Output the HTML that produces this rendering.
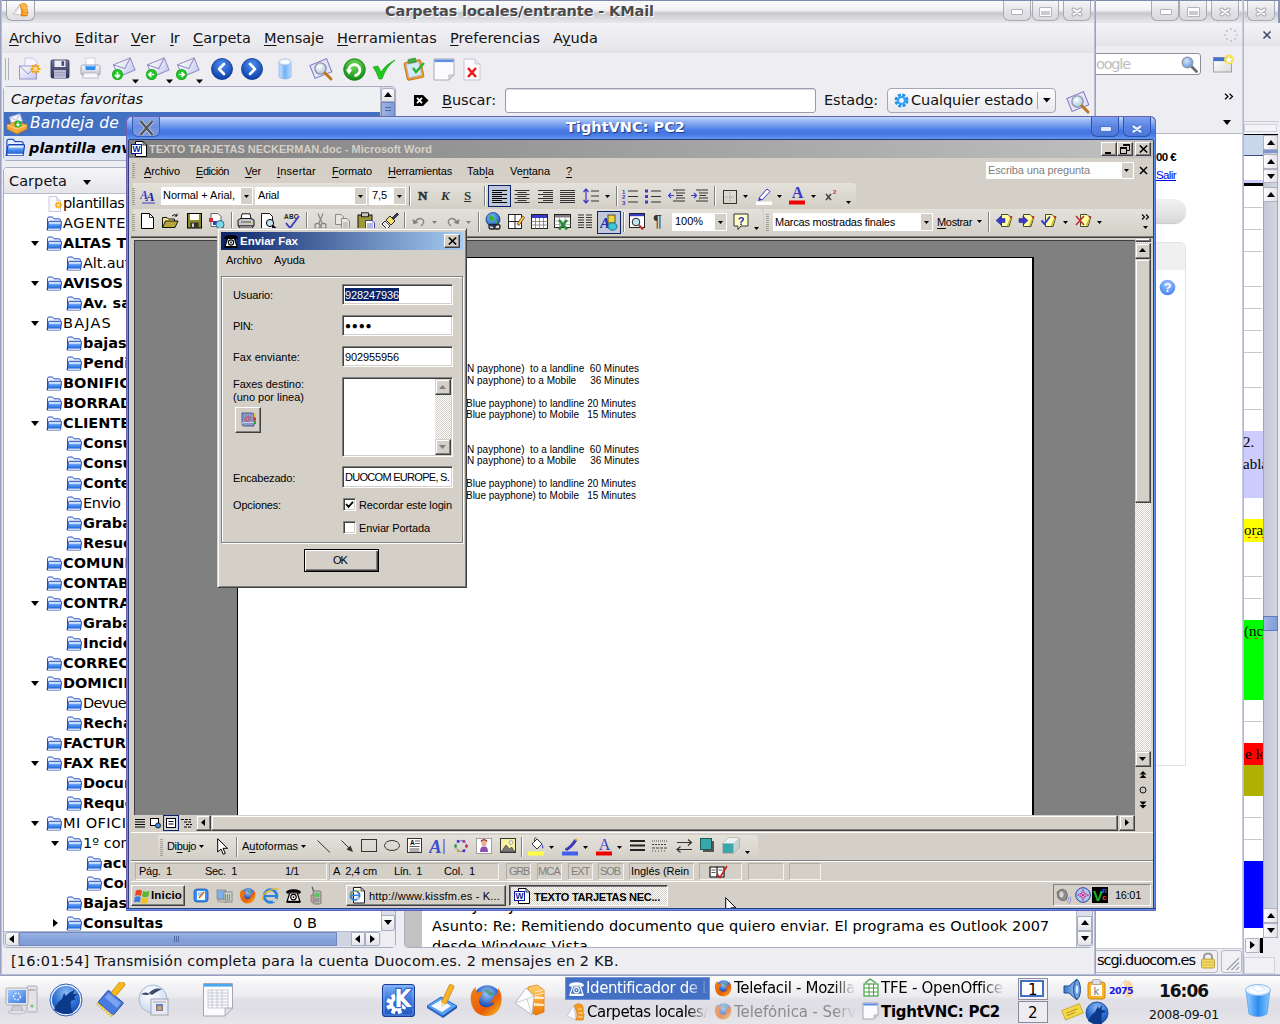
<!DOCTYPE html>
<html><head><meta charset="utf-8"><title>KMail</title>
<style>
*{box-sizing:border-box;margin:0;padding:0}
html,body{width:1280px;height:1024px;overflow:hidden;background:#eeeef2}
body{font-family:"DejaVu Sans","Liberation Sans",sans-serif;font-size:14px;color:#111;position:relative}
.a{position:absolute}
.t{position:absolute;white-space:nowrap;line-height:1}
u{text-decoration:underline;text-underline-offset:2px;text-decoration-thickness:1px}
</style></head><body>
<div class="a" style="left:1096px;top:0px;width:148px;height:976px;background:#eeeef2"></div>
<div class="a" style="left:1096px;top:0px;width:148px;height:23px;background:linear-gradient(#fbfbfc 0px,#f4f4f6 9px,#e9e9ec 11px,#c6c6cb 13px,#d2d2d7 16px,#e6e6ea 22px)"></div>
<div class="a" style="left:1096px;top:0px;width:148px;height:1px;background:#7f88ad"></div>
<div class="a" style="left:1151px;top:1px;width:28px;height:20px;border:1px solid #a9a9b3;border-top:none;border-radius:0 0 6px 6px;background:linear-gradient(#f6f6f8,#e4e4e8 50%,#dadade)"></div>
<div class="a" style="left:1179px;top:1px;width:28px;height:20px;border:1px solid #a9a9b3;border-top:none;border-radius:0 0 6px 6px;background:linear-gradient(#f6f6f8,#e4e4e8 50%,#dadade)"></div>
<div class="a" style="left:1211px;top:1px;width:28px;height:20px;border:1px solid #a9a9b3;border-top:none;border-radius:0 0 6px 6px;background:linear-gradient(#f6f6f8,#e4e4e8 50%,#dadade)"></div>
<div class="a" style="left:1160px;top:9px;width:12px;height:6px;border:1px solid #b0b0ba;background:#fff;border-radius:1px"></div>
<div class="a" style="left:1187px;top:7px;width:13px;height:10px;border:1px solid #b4b4be;background:linear-gradient(#fff 3px,#c9c9d1 3px);box-shadow:inset 0 0 0 1px #fff;border-radius:1px"></div>
<svg class="a" style="left:1218px;top:6px;" width="14" height="11" viewBox="0 0 14 11"><path d="M3.5 3.5 L10.5 8.5 M10.5 3.5 L3.5 8.5" stroke="#adadb7" stroke-width="4" stroke-linecap="round"/><path d="M3.5 3.5 L10.5 8.5 M10.5 3.5 L3.5 8.5" stroke="#fff" stroke-width="2" stroke-linecap="round"/></svg>
<div class="a" style="left:1096px;top:23px;width:146px;height:23px;background:linear-gradient(#f3f3f6,#eeeef2 35%,#e9e9ed 75%,#e2e2e7)"></div>
<svg class="a" style="left:1223px;top:27px;" width="16" height="16" viewBox="0 0 16 16"><circle cx="13.8" cy="8.0" r="1.1" fill="#c4c4cc"/><circle cx="12.1" cy="12.1" r="1.1" fill="#c4c4cc"/><circle cx="8.0" cy="13.8" r="1.1" fill="#c4c4cc"/><circle cx="3.9" cy="12.1" r="1.1" fill="#c4c4cc"/><circle cx="2.2" cy="8.0" r="1.1" fill="#c4c4cc"/><circle cx="3.9" cy="3.9" r="1.1" fill="#c4c4cc"/><circle cx="8.0" cy="2.2" r="1.1" fill="#c4c4cc"/><circle cx="12.1" cy="3.9" r="1.1" fill="#c4c4cc"/></svg>
<div class="a" style="left:1090px;top:53px;width:111px;height:22px;background:#fff;border:1px solid #8f8f96;border-radius:3px"></div>
<div class="t" style="left:1096px;top:56.7px;font-size:14.5px;color:#bdbdbd;letter-spacing:-1.20px;">oogle</div>
<svg class="a" style="left:1180px;top:55px;" width="19" height="19" viewBox="0 0 19 19"><defs><radialGradient id="g1" cx=".4" cy=".35" r=".7"><stop offset="0" stop-color="#d6e8fb"/><stop offset="1" stop-color="#5f97dc"/></radialGradient></defs><path d="M11.5 11.5 L16.5 16.5" stroke="#6a6a6a" stroke-width="2.8" stroke-linecap="round"/><circle cx="7.5" cy="7.5" r="5.3" fill="url(#g1)" stroke="#8c99aa" stroke-width="1.3"/></svg>
<svg class="a" style="left:1212px;top:53px;" width="24" height="22" viewBox="0 0 24 22"><defs><linearGradient id="g2" x1="0" y1="0" x2="1" y2="1"><stop offset="0" stop-color="#fff"/><stop offset="1" stop-color="#dcdcdc"/></linearGradient></defs><rect x="1.5" y="4.5" width="18" height="14.5" fill="url(#g2)" stroke="#a0a0a0" stroke-width="1"/><rect x="1.5" y="4.5" width="18" height="3.6" fill="#3f74cc"/><circle cx="17" cy="6.5" r="5" fill="#f6e04a" opacity=".9"/><path d="M17 3 L18 5.6 L20.8 5.7 L18.6 7.4 L19.4 10 L17 8.5 L14.6 10 L15.4 7.4 L13.2 5.7 L16 5.6Z" fill="#fff"/></svg>
<svg class="a" style="left:1224px;top:93px;" width="10" height="7" viewBox="0 0 10 7"><path d="M1 .8 L4 3.5 L1 6.2 M5.5 .8 L8.5 3.5 L5.5 6.2" stroke="#000" stroke-width="1.2" fill="none"/></svg>
<svg class="a" style="left:1223px;top:120px;" width="9" height="6" viewBox="0 0 9 6"><path d="M0 0 H8 L4 5Z" fill="#000"/></svg>
<div class="a" style="left:1096px;top:133px;width:146px;height:815px;background:#fff;border-top:1px solid #b4b6c4"></div>
<div class="t" style="left:1156px;top:151.8px;font-size:11.5px;font-family:'Liberation Sans','DejaVu Sans',sans-serif;color:#000;font-weight:bold;letter-spacing:-0.60px;">00 €</div>
<div class="t" style="left:1156px;top:170.3px;font-size:11.5px;font-family:'Liberation Sans','DejaVu Sans',sans-serif;color:#0000ee;letter-spacing:-0.60px;text-decoration:underline;">Salir</div>
<div class="a" style="left:1140px;top:199px;width:46px;height:24px;background:linear-gradient(#f1f1f1,#e4e4e4 60%,#d6d6d6);border-radius:0 12px 12px 0;box-shadow:0 1px 1px #c8c8c8"></div>
<div class="a" style="left:1140px;top:242px;width:46px;height:524px;background:#fff;border:1px solid #e2e2e2;border-radius:0 6px 0 0"></div>
<div class="a" style="left:1140px;top:243px;width:45px;height:27px;background:#f0f0f0;border-radius:0 5px 0 0"></div>
<svg class="a" style="left:1159px;top:279px;" width="17" height="17" viewBox="0 0 17 17"><defs><radialGradient id="g3" cx=".5" cy=".3" r=".8"><stop offset="0" stop-color="#9cc4ff"/><stop offset="1" stop-color="#3b7cf0"/></radialGradient></defs><circle cx="8.5" cy="8.5" r="7.8" fill="url(#g3)"/><text x="8.5" y="13" text-anchor="middle" font-family="Liberation Sans,sans-serif" font-weight="bold" font-size="12.5" fill="#fff">?</text></svg>
<div class="a" style="left:1096px;top:948px;width:146px;height:28px;background:#eeeef2;border-top:1px solid #c4c6d2"></div>
<div class="a" style="left:1090px;top:950px;width:128px;height:23px;border:1px solid #b6b8c6;border-radius:3px;background:#f1f1f5"></div>
<div class="t" style="left:1097px;top:952.7px;font-size:14.5px;color:#000;letter-spacing:-1.05px;">scgi.duocom.es</div>
<svg class="a" style="left:1199px;top:951px;" width="18" height="18" viewBox="0 0 18 18"><path d="M5 9 V6 Q5 2.5 9 2.5 Q13 2.5 13 6 V9" fill="none" stroke="#9c9c9c" stroke-width="2"/><rect x="2.5" y="8" width="13" height="9" rx="1.5" fill="#f3d86a" stroke="#b89a28" stroke-width=".9"/><path d="M3.5 11 h11 M3.5 14 h11" stroke="#d4b43c" stroke-width="1"/></svg>
<div class="a" style="left:1221px;top:950px;width:21px;height:23px;border:1px solid #b6b8c6;border-radius:3px;background:#f1f1f5"></div>
<svg class="a" style="left:1225px;top:956px;" width="15" height="15" viewBox="0 0 15 15"><path d="M14 2 L2 14 M14 6.5 L6.5 14 M14 11 L11 14" stroke="#9a9ca8" stroke-width="1.1"/></svg>
<div class="a" style="left:1242px;top:0px;width:2px;height:976px;background:linear-gradient(90deg,#d6d9e6,#a4aac6)"></div>
<div class="a" style="left:1096px;top:974px;width:148px;height:2px;background:linear-gradient(#c4c8da,#8a92b6)"></div>
<div class="a" style="left:1244px;top:0px;width:36px;height:976px;background:#eeeef2"></div>
<div class="a" style="left:1244px;top:0px;width:36px;height:23px;background:linear-gradient(#fbfbfc 0px,#f4f4f6 9px,#e9e9ec 11px,#c6c6cb 13px,#d2d2d7 16px,#e6e6ea 22px)"></div>
<div class="a" style="left:1244px;top:0px;width:36px;height:1px;background:#7f88ad"></div>
<div class="a" style="left:1247px;top:1px;width:28px;height:20px;border:1px solid #a9a9b3;border-top:none;border-radius:0 0 6px 6px;background:linear-gradient(#f6f6f8,#e4e4e8 50%,#dadade)"></div>
<svg class="a" style="left:1254px;top:6px;" width="14" height="11" viewBox="0 0 14 11"><path d="M3.5 3.5 L10.5 8.5 M10.5 3.5 L3.5 8.5" stroke="#adadb7" stroke-width="4" stroke-linecap="round"/><path d="M3.5 3.5 L10.5 8.5 M10.5 3.5 L3.5 8.5" stroke="#fff" stroke-width="2" stroke-linecap="round"/></svg>
<div class="a" style="left:1278px;top:0px;width:2px;height:23px;background:#8a92b6"></div>
<div class="a" style="left:1244px;top:23px;width:36px;height:23px;background:linear-gradient(#f3f3f6,#eeeef2 35%,#e9e9ed 75%,#e2e2e7)"></div>
<svg class="a" style="left:1262px;top:30px;" width="10" height="10" viewBox="0 0 10 10"><path d="M1.5 1.5 L8.5 8.5 M8.5 1.5 L1.5 8.5" stroke="#3b4262" stroke-width="1.5"/></svg>
<div class="a" style="left:1244px;top:121px;width:35px;height:1px;background:#c9cbd6"></div>
<div class="a" style="left:1244px;top:124px;width:33px;height:8px;background:#f4f4f7;border:1px solid #d0d2dc"></div>
<div class="a" style="left:1244px;top:133px;width:19px;height:805px;background:#fff"></div>
<div class="a" style="left:1244px;top:134px;width:34px;height:1px;background:#000"></div>
<div class="a" style="left:1244px;top:135px;width:19px;height:20px;background:#c9d6ec"></div>
<div class="a" style="left:1244px;top:155px;width:19px;height:1px;background:#3c4c84"></div>
<div class="a" style="left:1244px;top:180px;width:19px;height:3px;background:#ccccff"></div>
<div class="a" style="left:1244px;top:183px;width:34px;height:3px;background:#000"></div>
<div class="a" style="left:1244px;top:207px;width:18px;height:1px;background:#c8c8c8"></div>
<div class="a" style="left:1244px;top:229px;width:18px;height:1px;background:#c8c8c8"></div>
<div class="a" style="left:1244px;top:251px;width:18px;height:1px;background:#c8c8c8"></div>
<div class="a" style="left:1244px;top:286px;width:18px;height:1px;background:#c8c8c8"></div>
<div class="a" style="left:1244px;top:308px;width:18px;height:1px;background:#c8c8c8"></div>
<div class="a" style="left:1244px;top:330px;width:18px;height:1px;background:#c8c8c8"></div>
<div class="a" style="left:1244px;top:352px;width:18px;height:1px;background:#c8c8c8"></div>
<div class="a" style="left:1244px;top:387px;width:18px;height:1px;background:#c8c8c8"></div>
<div class="a" style="left:1244px;top:409px;width:18px;height:1px;background:#c8c8c8"></div>
<div class="a" style="left:1244px;top:576px;width:18px;height:1px;background:#c8c8c8"></div>
<div class="a" style="left:1244px;top:598px;width:18px;height:1px;background:#c8c8c8"></div>
<div class="a" style="left:1244px;top:721px;width:18px;height:1px;background:#c8c8c8"></div>
<div class="a" style="left:1244px;top:817px;width:18px;height:1px;background:#c8c8c8"></div>
<div class="a" style="left:1244px;top:839px;width:18px;height:1px;background:#c8c8c8"></div>
<div class="a" style="left:1244px;top:431px;width:19px;height:67px;background:#ccccff"></div>
<div class="t" style="left:1243px;top:435.3px;font-size:15px;font-family:'Liberation Serif','DejaVu Serif',serif;color:#000;">2.</div>
<div class="t" style="left:1243px;top:457.3px;font-size:15px;font-family:'Liberation Serif','DejaVu Serif',serif;color:#000;width:20px;overflow:hidden;">abla</div>
<div class="a" style="left:1244px;top:519px;width:19px;height:23px;background:#ffff00"></div>
<div class="t" style="left:1244px;top:523.3px;font-size:15px;font-family:'Liberation Serif','DejaVu Serif',serif;color:#000;width:19px;overflow:hidden;text-decoration:underline wavy #e00000;text-decoration-thickness:1px;text-underline-offset:1px;">ora</div>
<div class="a" style="left:1244px;top:620px;width:19px;height:80px;background:#00ff00"></div>
<div class="t" style="left:1244px;top:624.3px;font-size:15px;font-family:'Liberation Serif','DejaVu Serif',serif;color:#000;width:19px;overflow:hidden;text-decoration:underline wavy #e00000;text-decoration-thickness:1px;text-underline-offset:1px;">(nce</div>
<div class="a" style="left:1244px;top:743px;width:19px;height:22px;background:#ff0000"></div>
<div class="t" style="left:1245px;top:747.3px;font-size:15px;font-family:'Liberation Serif','DejaVu Serif',serif;color:#000;width:18px;overflow:hidden;">e lo</div>
<div class="a" style="left:1244px;top:765px;width:19px;height:31px;background:#b0b000"></div>
<div class="a" style="left:1244px;top:861px;width:19px;height:67px;background:#0000ff"></div>
<div class="a" style="left:1263px;top:135px;width:15px;height:803px;background:linear-gradient(90deg,#c4c8d6,#d4d7e2);border-left:1px solid #9ea4bc;border-right:1px solid #9ea4bc"></div>
<div class="a" style="left:1263px;top:135px;width:15px;height:15px;background:linear-gradient(90deg,#fcfcfd,#e2e2e8);border:1px solid #aeb1c0;border-radius:2px"></div>
<svg class="a" style="left:1267px;top:140px;" width="8" height="6" viewBox="0 0 8 6"><path d="M4 0 L8 5 L0 5Z" fill="#000"/></svg>
<div class="a" style="left:1263px;top:150px;width:15px;height:3px;background:#7f96cc"></div>
<div class="a" style="left:1263px;top:154px;width:15px;height:15px;background:linear-gradient(90deg,#fcfcfd,#e2e2e8);border:1px solid #aeb1c0;border-radius:2px"></div>
<svg class="a" style="left:1267px;top:159px;" width="8" height="6" viewBox="0 0 8 6"><path d="M4 0 L8 5 L0 5Z" fill="#000"/></svg>
<div class="a" style="left:1263px;top:169px;width:15px;height:14px;background:linear-gradient(90deg,#fcfcfd,#e2e2e8);border:1px solid #aeb1c0;border-radius:2px"></div>
<svg class="a" style="left:1267px;top:174px;" width="8" height="6" viewBox="0 0 8 6"><path d="M0 0 H8 L4 5Z" fill="#000"/></svg>
<div class="a" style="left:1263px;top:187px;width:15px;height:15px;background:linear-gradient(90deg,#fcfcfd,#e2e2e8);border:1px solid #aeb1c0;border-radius:2px"></div>
<svg class="a" style="left:1267px;top:192px;" width="8" height="6" viewBox="0 0 8 6"><path d="M4 0 L8 5 L0 5Z" fill="#000"/></svg>
<div class="a" style="left:1263px;top:616px;width:15px;height:15px;background:linear-gradient(90deg,#9db4e2,#7f9cd8);border:1px solid #5f7cc0"></div>
<div class="a" style="left:1263px;top:908px;width:15px;height:15px;background:linear-gradient(90deg,#fcfcfd,#e2e2e8);border:1px solid #aeb1c0;border-radius:2px"></div>
<svg class="a" style="left:1267px;top:913px;" width="8" height="6" viewBox="0 0 8 6"><path d="M4 0 L8 5 L0 5Z" fill="#000"/></svg>
<div class="a" style="left:1263px;top:923px;width:15px;height:15px;background:linear-gradient(90deg,#fcfcfd,#e2e2e8);border:1px solid #aeb1c0;border-radius:2px"></div>
<svg class="a" style="left:1267px;top:928px;" width="8" height="6" viewBox="0 0 8 6"><path d="M0 0 H8 L4 5Z" fill="#000"/></svg>
<div class="a" style="left:1244px;top:938px;width:35px;height:38px;background:#eeeef2"></div>
<div class="a" style="left:1245px;top:938px;width:15px;height:15px;background:linear-gradient(90deg,#fcfcfd,#e2e2e8);border:1px solid #aeb1c0;border-radius:2px"></div>
<svg class="a" style="left:1250px;top:941px;" width="6" height="9" viewBox="0 0 6 9"><path d="M0 0 V8 L5 4Z" fill="#000"/></svg>
<div class="a" style="left:1260px;top:938px;width:3px;height:15px;background:#000"></div>
<div class="a" style="left:1244px;top:957px;width:31px;height:17px;border:1px solid #d0d2dc;background:#f1f1f5"></div>
<div class="a" style="left:1244px;top:974px;width:36px;height:2px;background:linear-gradient(#c4c8da,#8a92b6)"></div>
<div class="a" style="left:0px;top:0px;width:1096px;height:976px;background:#eeeef2"></div>
<div class="a" style="left:0px;top:0px;width:1096px;height:23px;background:linear-gradient(#fbfbfc 0px,#f4f4f6 9px,#e9e9ec 11px,#c6c6cb 13px,#d2d2d7 16px,#e6e6ea 22px)"></div>
<div class="a" style="left:0px;top:0px;width:1096px;height:1px;background:#7f88ad"></div>
<div class="a" style="left:6px;top:1px;width:29px;height:20px;border:1px solid #a3a3ad;border-top:none;border-radius:0 0 6px 6px;background:linear-gradient(#fdfdfd,#ebebee 55%,#dedee2)"></div>
<svg class="a" style="left:12px;top:2px;" width="18" height="17" viewBox="0 0 18 17"><defs><linearGradient id="g4" x1="0" y1="0" x2="0" y2="1"><stop offset="0" stop-color="#ffc44a"/><stop offset="1" stop-color="#ef7d00"/></linearGradient></defs><path d="M1 12 L8 2 L10 13 Z" fill="#fafafa" stroke="#b4b4be" stroke-width=".8"/><path d="M3.5 11 L8 3" stroke="#c8c8d0" stroke-width=".8"/><path d="M8 3 Q11 0 14 2 Q16 4 15 7 Q17 10 15 14 L9 14 Q11 9 8 3Z" fill="url(#g4)" stroke="#d47400" stroke-width=".6"/><path d="M11 6 h4 M11.5 9 h4 M11 12 h4" stroke="#ffdf9a" stroke-width=".9"/></svg>
<div class="t" style="left:385.0px;top:3.7px;font-size:14.5px;color:#4c4c4c;font-weight:bold;letter-spacing:-0.12px;text-shadow:1px 1px 0 #fff;">Carpetas locales/entrante - KMail</div>
<div class="a" style="left:1003px;top:1px;width:28px;height:20px;border:1px solid #a9a9b3;border-top:none;border-radius:0 0 6px 6px;background:linear-gradient(#f6f6f8,#e4e4e8 50%,#dadade)"></div>
<div class="a" style="left:1032px;top:1px;width:27px;height:20px;border:1px solid #a9a9b3;border-top:none;border-radius:0 0 6px 6px;background:linear-gradient(#f6f6f8,#e4e4e8 50%,#dadade)"></div>
<div class="a" style="left:1063px;top:1px;width:28px;height:20px;border:1px solid #a9a9b3;border-top:none;border-radius:0 0 6px 6px;background:linear-gradient(#f6f6f8,#e4e4e8 50%,#dadade)"></div>
<div class="a" style="left:1011px;top:9px;width:12px;height:6px;border:1px solid #b0b0ba;background:#fff;border-radius:1px"></div>
<div class="a" style="left:1039px;top:7px;width:13px;height:10px;border:1px solid #b4b4be;background:linear-gradient(#fff 3px,#c9c9d1 3px);box-shadow:inset 0 0 0 1px #fff;border-radius:1px"></div>
<svg class="a" style="left:1070px;top:6px;" width="14" height="11" viewBox="0 0 14 11"><path d="M3.5 3.5 L10.5 8.5 M10.5 3.5 L3.5 8.5" stroke="#adadb7" stroke-width="4" stroke-linecap="round"/><path d="M3.5 3.5 L10.5 8.5 M10.5 3.5 L3.5 8.5" stroke="#fff" stroke-width="2" stroke-linecap="round"/></svg>
<div class="a" style="left:0px;top:23px;width:1096px;height:30px;background:linear-gradient(#f3f3f6,#eeeef2 35%,#e9e9ed 75%,#e2e2e7)"></div>
<div class="t" style="left:9px;top:30.7px;font-size:14.5px;letter-spacing:-0.32px;"><u>A</u>rchivo</div>
<div class="t" style="left:75px;top:30.7px;font-size:14.5px;letter-spacing:0.18px;"><u>E</u>ditar</div>
<div class="t" style="left:131px;top:30.7px;font-size:14.5px;letter-spacing:0.44px;"><u>V</u>er</div>
<div class="t" style="left:170px;top:30.7px;font-size:14.5px;letter-spacing:-0.62px;"><u>I</u>r</div>
<div class="t" style="left:193px;top:30.7px;font-size:14.5px;letter-spacing:0.05px;"><u>C</u>arpeta</div>
<div class="t" style="left:264px;top:30.7px;font-size:14.5px;"><u>M</u>ensaje</div>
<div class="t" style="left:337px;top:30.7px;font-size:14.5px;letter-spacing:0.10px;"><u>H</u>erramientas</div>
<div class="t" style="left:450px;top:30.7px;font-size:14.5px;letter-spacing:0.06px;"><u>P</u>referencias</div>
<div class="t" style="left:553px;top:30.7px;font-size:14.5px;letter-spacing:0.04px;">A<u>y</u>uda</div>
<div class="a" style="left:0px;top:53px;width:1096px;height:34px;background:#eeeef2"></div>
<div class="a" style="left:5px;top:58px;width:1px;height:22px;background:#b0b0bb"></div>
<div class="a" style="left:8px;top:58px;width:1px;height:22px;background:#b0b0bb"></div>
<svg class="a" style="left:18px;top:57px;" width="24" height="24" viewBox="0 0 24 24"><defs><linearGradient id="g5" x1="0" y1="0" x2="1" y2="1"><stop offset="0" stop-color="#fff"/><stop offset="1" stop-color="#c3c6ee"/></linearGradient></defs><path d="M7 1 H15 L19 5 V14 H7Z" fill="#f6f6ff" stroke="#bcbcd8" stroke-width=".8"/><rect x="1.5" y="9" width="17" height="13" fill="url(#g5)" stroke="#9696cc" stroke-width="1"/><path d="M1.5 9 L10 17 L18.5 9" fill="none" stroke="#9696cc"/><g transform="translate(17.5,12)" stroke="#f7a30c" stroke-width="1.8"><path d="M-5 0H5M0 -5V5M-3.5 -3.5L3.5 3.5M-3.5 3.5L3.5 -3.5"/></g><circle cx="17.5" cy="12" r="2.2" fill="#ffe08a"/></svg>
<svg class="a" style="left:50px;top:58px;" width="20" height="22" viewBox="0 0 20 22"><defs><linearGradient id="g6" x1="0" y1="0" x2="0" y2="1"><stop offset="0" stop-color="#6d7296"/><stop offset="1" stop-color="#2d3158"/></linearGradient></defs><rect x="1" y="2" width="18" height="18" rx="1.5" fill="url(#g6)" stroke="#2a2d50" stroke-width=".8"/><rect x="4.5" y="2.5" width="11" height="6.5" fill="#eeeef6"/><rect x="11.5" y="3.2" width="2.6" height="4.6" fill="#474b70"/><rect x="4" y="12" width="12" height="8" fill="#b9bbd2"/><path d="M4 14.5h12M4 17h12" stroke="#8f92b0" stroke-width=".7"/></svg>
<svg class="a" style="left:78px;top:56px;" width="25" height="25" viewBox="0 0 25 25"><defs><linearGradient id="g7" x1="0" y1="0" x2="0" y2="1"><stop offset="0" stop-color="#fff"/><stop offset="1" stop-color="#bfc0cc"/></linearGradient></defs><path d="M8 2 H17 V12 H8Z" fill="#fff" stroke="#c4c6d6" stroke-width=".8"/><path d="M3 11 Q3 9 5 9 H20 Q22 9 22 11 V18 Q22 19 20 19 H5 Q3 19 3 18Z" fill="url(#g7)" stroke="#9a9cb0" stroke-width=".9"/><path d="M7 10 L8 14 H17 L18 10Z" fill="#2f8df0"/><path d="M7 10 H18" stroke="#86c2ff" stroke-width="1.2"/><path d="M6 17 H19 L20.5 22 H4.5Z" fill="#f8f8fb" stroke="#b0b2c2" stroke-width=".8"/></svg>
<svg class="a" style="left:112px;top:57px;" width="28" height="28" viewBox="0 0 28 28"><defs><linearGradient id="g8" x1="0" y1="0" x2="1" y2="1"><stop offset="0" stop-color="#fff"/><stop offset="1" stop-color="#c9c9ee"/></linearGradient></defs><g transform="rotate(-22 12 11)"><rect x="3.5" y="4" width="18" height="13" fill="url(#g8)" stroke="#8d8cc4" stroke-width="1"/><path d="M3.5 4 L12.5 12 L21.5 4" fill="none" stroke="#8d8cc4" stroke-width="1"/></g><g transform="translate(0,12)"><circle cx="5.5" cy="5.5" r="5.5" fill="#14a81a"/><circle cx="5.5" cy="5.5" r="4.8" fill="#22c22a"/><path d="M5.5 2.8 V8 M3 5.8 L5.5 8.3 L8 5.8" stroke="#fff" stroke-width="1.7" fill="none"/></g><path d="M20 22.5 H27 L23.5 26.5Z" fill="#000"/></svg>
<svg class="a" style="left:146px;top:57px;" width="28" height="28" viewBox="0 0 28 28"><defs><linearGradient id="g9" x1="0" y1="0" x2="1" y2="1"><stop offset="0" stop-color="#fff"/><stop offset="1" stop-color="#c9c9ee"/></linearGradient></defs><g transform="rotate(-22 12 11)"><rect x="3.5" y="4" width="18" height="13" fill="url(#g9)" stroke="#8d8cc4" stroke-width="1"/><path d="M3.5 4 L12.5 12 L21.5 4" fill="none" stroke="#8d8cc4" stroke-width="1"/></g><g transform="translate(0,12)"><circle cx="5.5" cy="5.5" r="5.5" fill="#14a81a"/><circle cx="5.5" cy="5.5" r="4.8" fill="#22c22a"/><path d="M8.2 5.5 H3 M5.4 3 L2.9 5.5 L5.4 8" stroke="#fff" stroke-width="1.7" fill="none"/></g><path d="M20 22.5 H27 L23.5 26.5Z" fill="#000"/></svg>
<svg class="a" style="left:176px;top:57px;" width="28" height="28" viewBox="0 0 28 28"><defs><linearGradient id="g10" x1="0" y1="0" x2="1" y2="1"><stop offset="0" stop-color="#fff"/><stop offset="1" stop-color="#c9c9ee"/></linearGradient></defs><g transform="rotate(-22 12 11)"><rect x="3.5" y="4" width="18" height="13" fill="url(#g10)" stroke="#8d8cc4" stroke-width="1"/><path d="M3.5 4 L12.5 12 L21.5 4" fill="none" stroke="#8d8cc4" stroke-width="1"/></g><g transform="translate(0,12)"><circle cx="5.5" cy="5.5" r="5.5" fill="#14a81a"/><circle cx="5.5" cy="5.5" r="4.8" fill="#22c22a"/><path d="M2.8 5.5 H8 M5.6 3 L8.1 5.5 L5.6 8" stroke="#fff" stroke-width="1.7" fill="none"/></g><path d="M20 22.5 H27 L23.5 26.5Z" fill="#000"/></svg>
<svg class="a" style="left:211px;top:58px;" width="22" height="22" viewBox="0 0 22 22"><defs><radialGradient id="g11" cx=".5" cy=".3" r=".7"><stop offset="0" stop-color="#4f8ff0"/><stop offset="1" stop-color="#0a3ea8"/></radialGradient></defs><circle cx="11" cy="11" r="10.5" fill="url(#g11)" stroke="#0a348c" stroke-width=".8"/><path d="M13 6 L8 11 L13 16" stroke="#fff" stroke-width="2.6" fill="none" stroke-linecap="round" stroke-linejoin="round"/></svg>
<svg class="a" style="left:241px;top:58px;" width="22" height="22" viewBox="0 0 22 22"><defs><radialGradient id="g12" cx=".5" cy=".3" r=".7"><stop offset="0" stop-color="#4f8ff0"/><stop offset="1" stop-color="#0a3ea8"/></radialGradient></defs><circle cx="11" cy="11" r="10.5" fill="url(#g12)" stroke="#0a348c" stroke-width=".8"/><path d="M9 6 L14 11 L9 16" stroke="#fff" stroke-width="2.6" fill="none" stroke-linecap="round" stroke-linejoin="round"/></svg>
<svg class="a" style="left:277px;top:57px;" width="17" height="25" viewBox="0 0 17 25"><defs><linearGradient id="g13" x1="0" y1="0" x2="1" y2="0"><stop offset="0" stop-color="#cfe6ff"/><stop offset=".5" stop-color="#6fb0f5"/><stop offset="1" stop-color="#bcdcff"/></linearGradient></defs><path d="M2 5 V20 Q8 24 14 20 V5Z" fill="url(#g13)" stroke="#8eb4e6" stroke-width=".8"/><ellipse cx="8" cy="5" rx="6" ry="3" fill="#eef6ff" stroke="#9dbbe0" stroke-width=".8"/><ellipse cx="8" cy="4.5" rx="3.5" ry="1.6" fill="#fff"/></svg>
<svg class="a" style="left:309px;top:57px;" width="26" height="25" viewBox="0 0 26 25"><defs><radialGradient id="g14" cx=".4" cy=".35" r=".7"><stop offset="0" stop-color="#ffffff"/><stop offset="1" stop-color="#a9c4d8"/></radialGradient></defs><g transform="rotate(-22 12 12)"><rect x="3" y="4.5" width="18" height="14" fill="#e6e4fa" stroke="#7f78c4" stroke-width="1"/></g><circle cx="11.5" cy="11.5" r="5.6" fill="url(#g14)" stroke="#8a98a8" stroke-width="1.4"/><path d="M16 16 L22 22" stroke="#c0761a" stroke-width="3" stroke-linecap="round"/></svg>
<svg class="a" style="left:343px;top:58px;" width="23" height="23" viewBox="0 0 23 23"><defs><radialGradient id="g15" cx=".5" cy=".3" r=".7"><stop offset="0" stop-color="#6fdc5a"/><stop offset="1" stop-color="#128a12"/></radialGradient></defs><circle cx="11.5" cy="11.5" r="10.8" fill="url(#g15)" stroke="#0f7a0f" stroke-width=".8"/><path d="M6 13 A5.5 5.5 0 1 1 11.5 17.5" fill="none" stroke="#fff" stroke-width="2.8"/><path d="M2.8 11.5 L9.5 11.5 L6 16.5Z" fill="#fff"/></svg>
<svg class="a" style="left:372px;top:58px;" width="24" height="22" viewBox="0 0 24 22"><path d="M1 9 L6 8 L9 14 Q14 6 23 2 Q14 9 10 21 L7 21 Q4 13 1 9Z" fill="#1ec81e" stroke="#0f9a0f" stroke-width=".6"/></svg>
<svg class="a" style="left:402px;top:57px;" width="25" height="25" viewBox="0 0 25 25"><g transform="rotate(-12 12 13)"><rect x="3.5" y="4" width="17" height="18" rx="1.5" fill="#f09a2e" stroke="#c06a10" stroke-width=".8"/><rect x="5.5" y="6" width="13" height="13.5" fill="#d6e8fb" stroke="#9ab6dc" stroke-width=".6"/><rect x="8" y="1.5" width="8" height="4" rx="1" fill="#3fae3f" stroke="#2a862a" stroke-width=".6"/></g><path d="M11 11 L14 15 L22 6" stroke="#28b428" stroke-width="2.4" fill="none"/></svg>
<svg class="a" style="left:433px;top:58px;" width="22" height="23" viewBox="0 0 22 23"><path d="M1 1 H21 V17 L16 22 H1Z" fill="#fbfbfd" stroke="#a9aab8" stroke-width="1"/><rect x="1.5" y="1.5" width="19" height="2.6" fill="#5f8fe4"/><path d="M21 17 H16 V22Z" fill="#d8d8e0" stroke="#a9aab8" stroke-width=".8"/></svg>
<svg class="a" style="left:463px;top:58px;" width="19" height="23" viewBox="0 0 19 23"><path d="M1 1 H12 L17 6 V22 H1Z" fill="#fbfbfd" stroke="#c2c3d2" stroke-width="1"/><path d="M12 1 V6 H17" fill="#e6e6ee" stroke="#c2c3d2" stroke-width=".8"/><path d="M5 10 L13 19 M13 10 L5 19" stroke="#f01818" stroke-width="2.6"/></svg>
<div class="a" style="left:3px;top:86px;width:393px;height:75px;border:1px solid #a9adc0;border-radius:4px;background:#eff0f4"></div>
<div class="a" style="left:4px;top:87px;width:376px;height:25px;background:#eff0f4"></div>
<div class="t" style="left:11px;top:91.7px;font-size:14.5px;font-style:italic;letter-spacing:-0.08px;">Carpetas favoritas</div>
<div class="a" style="left:4px;top:112px;width:376px;height:24px;background:#4270c2"></div>
<svg class="a" style="left:6px;top:113px;" width="22" height="22" viewBox="0 0 22 22"><g transform="rotate(-18 11 8)"><rect x="5" y="2" width="11" height="8" fill="#f2f4ff" stroke="#aeb2d8" stroke-width=".7"/><path d="M5 2 L10.5 7 L16 2" fill="none" stroke="#aeb2d8" stroke-width=".7"/></g><path d="M1 12 L11 8 L21 12 L21 16 L11 21 L1 16Z" fill="#f4a83a" stroke="#c87a14" stroke-width=".7"/><path d="M1 12 L11 16 L21 12" fill="none" stroke="#ffd894" stroke-width="1"/><circle cx="12" cy="11" r="3.6" fill="#27b82c"/><path d="M12 9 V12.6 M10.3 11.2 L12 13 L13.7 11.2" stroke="#fff" stroke-width="1.1" fill="none"/></svg>
<div class="t" style="left:30px;top:116.2px;font-size:15.5px;color:#fff;font-style:italic;letter-spacing:0.16px;">Bandeja de</div>
<div class="t" style="left:130px;top:116.2px;font-size:15.5px;color:#fff;font-style:italic;">entrada</div>
<div class="a" style="left:4px;top:136px;width:376px;height:24px;background:#dfe6f6"></div>
<svg class="a" style="left:5px;top:138px;" width="20.0" height="18.8" viewBox="0 0 16 15"><defs><linearGradient id="g17" x1="0" y1="0" x2="0" y2="1"><stop offset="0" stop-color="#bcd8ff"/><stop offset=".55" stop-color="#3d86ee"/><stop offset="1" stop-color="#1a4fc0"/></linearGradient></defs><path d="M1.5 13.5 V2.5 Q1.5 1 3 1 H6.5 L8 2.8 H13 Q14.5 2.8 14.5 4.3 V6" fill="#eaf2ff" stroke="#2a55c0" stroke-width="1"/><path d="M1 14 L2.3 6.2 Q2.5 5.3 3.5 5.3 H14.8 Q15.8 5.3 15.6 6.3 L14.5 14Z" fill="url(#g17)" stroke="#1a3fb0" stroke-width=".9"/><path d="M3 7 H14.6" stroke="#e6f0ff" stroke-width="1.3"/><path d="M2 13.2 H14.2" stroke="#fff" stroke-width="1.2"/></svg>
<div class="t" style="left:29px;top:140.7px;font-size:14.5px;color:#000;font-weight:bold;font-style:italic;">plantilla enviada</div>
<div class="a" style="left:380px;top:87px;width:15px;height:73px;background:#d6dbe8;border-left:1px solid #b4b8c8"></div>
<div class="a" style="left:381px;top:88px;width:14px;height:14px;background:linear-gradient(#fbfbfd,#e4e4ea);border:1px solid #a9adc0;border-radius:3px 3px 0 0"></div>
<svg class="a" style="left:384px;top:92px;" width="8" height="6" viewBox="0 0 8 6"><path d="M4 0 L8 5 L0 5Z" fill="#000"/></svg>
<div class="a" style="left:381px;top:102px;width:14px;height:15px;background:linear-gradient(90deg,#9db4e2,#7f9cd8);border:1px solid #6f88c0"></div>
<div class="a" style="left:385px;top:107px;width:6px;height:1px;background:#5069a5"></div>
<div class="a" style="left:385px;top:110px;width:6px;height:1px;background:#5069a5"></div>
<svg class="a" style="left:413px;top:94px;" width="17" height="13" viewBox="0 0 17 13"><path d="M1 1 H10 L15.5 6.5 L10 12 H1Z" fill="#000"/><path d="M4 3.8 L9 9.2 M9 3.8 L4 9.2" stroke="#fff" stroke-width="1.8"/></svg>
<div class="t" style="left:442px;top:93.0px;font-size:14.5px;letter-spacing:-0.02px;"><u>B</u>uscar:</div>
<div class="a" style="left:505px;top:88px;width:311px;height:25px;background:#fff;border:1px solid #9a9eac;border-radius:3px;box-shadow:inset 0 1px 1px #d8d8de"></div>
<div class="t" style="left:824px;top:93.0px;font-size:14.5px;letter-spacing:-0.04px;">Estad<u>o</u>:</div>
<div class="a" style="left:887px;top:88px;width:169px;height:25px;background:linear-gradient(#fcfcfd,#e9e9ee);border:1px solid #a3a6b4;border-radius:4px"></div>
<svg class="a" style="left:893px;top:92px;" width="17" height="17" viewBox="0 0 17 17"><circle cx="8.5" cy="8.5" r="5.2" fill="none" stroke="#1f8fe8" stroke-width="3.6" stroke-dasharray="2.7 1.4"/><circle cx="8.5" cy="8.5" r="4.6" fill="#3ba4f2"/><circle cx="8.5" cy="8.5" r="2.4" fill="#eaf5ff"/></svg>
<div class="t" style="left:911px;top:93.0px;font-size:14.5px;letter-spacing:-0.08px;">Cualquier estado</div>
<div class="a" style="left:1037px;top:92px;width:1px;height:17px;background:#a3a6b4"></div>
<svg class="a" style="left:1043px;top:98px;" width="8" height="5" viewBox="0 0 8 5"><path d="M0 0 H7.5 L3.75 4.5Z" fill="#000"/></svg>
<svg class="a" style="left:1066px;top:90px;" width="26" height="25" viewBox="0 0 26 25"><defs><radialGradient id="g18" cx=".4" cy=".35" r=".7"><stop offset="0" stop-color="#ffffff"/><stop offset="1" stop-color="#a9c4d8"/></radialGradient></defs><g transform="rotate(-22 12 12)"><rect x="3" y="4.5" width="18" height="14" fill="#e6e4fa" stroke="#7f78c4" stroke-width="1"/></g><circle cx="11.5" cy="11.5" r="5.6" fill="url(#g18)" stroke="#8a98a8" stroke-width="1.4"/><path d="M16 16 L22 22" stroke="#c0761a" stroke-width="3" stroke-linecap="round"/></svg>
<div class="a" style="left:3px;top:167px;width:393px;height:781px;border:1px solid #a9adc0;border-radius:4px;background:#fff"></div>
<div class="a" style="left:4px;top:168px;width:391px;height:26px;background:linear-gradient(#f6f6f9,#ebebf0 60%,#e4e4ea);border-bottom:1px solid #b9bccb;border-radius:3px 3px 0 0"></div>
<div class="t" style="left:9px;top:173.7px;font-size:14.5px;letter-spacing:0.05px;">Carpeta</div>
<svg class="a" style="left:83px;top:180px;" width="9" height="6" viewBox="0 0 9 6"><path d="M0 0 H8 L4 5Z" fill="#000"/></svg>
<svg class="a" style="left:48px;top:196px;" width="15" height="16" viewBox="0 0 15 16"><path d="M1 .5 H8.5 L12.5 4.5 V15.5 H1Z" fill="#fafaff" stroke="#c4c6d8" stroke-width=".9"/><path d="M8.5 .5 V4.5 H12.5" fill="#e8e8f2" stroke="#c4c6d8" stroke-width=".7"/><g transform="translate(10.5,9)" stroke="#f4a20c" stroke-width="1.4"><path d="M-3.6 0H3.6M0 -3.6V3.6M-2.6 -2.6L2.6 2.6M-2.6 2.6L2.6 -2.6"/></g><circle cx="10.5" cy="9" r="1.6" fill="#ffe49a"/></svg>
<div class="t" style="left:63px;top:195.7px;font-size:14.5px;color:#000;letter-spacing:-0.40px;">plantillas</div>
<svg class="a" style="left:46px;top:216px;" width="16.0" height="15.0" viewBox="0 0 16 15"><defs><linearGradient id="g19" x1="0" y1="0" x2="0" y2="1"><stop offset="0" stop-color="#bcd8ff"/><stop offset=".55" stop-color="#3d86ee"/><stop offset="1" stop-color="#1a4fc0"/></linearGradient></defs><path d="M1.5 13.5 V2.5 Q1.5 1 3 1 H6.5 L8 2.8 H13 Q14.5 2.8 14.5 4.3 V6" fill="#eaf2ff" stroke="#2a55c0" stroke-width="1"/><path d="M1 14 L2.3 6.2 Q2.5 5.3 3.5 5.3 H14.8 Q15.8 5.3 15.6 6.3 L14.5 14Z" fill="url(#g19)" stroke="#1a3fb0" stroke-width=".9"/><path d="M3 7 H14.6" stroke="#e6f0ff" stroke-width="1.3"/><path d="M2 13.2 H14.2" stroke="#fff" stroke-width="1.2"/></svg>
<div class="t" style="left:63px;top:215.7px;font-size:14.5px;color:#000;letter-spacing:0.69px;">AGENTES</div>
<svg class="a" style="left:46px;top:236px;" width="16.0" height="15.0" viewBox="0 0 16 15"><defs><linearGradient id="g20" x1="0" y1="0" x2="0" y2="1"><stop offset="0" stop-color="#bcd8ff"/><stop offset=".55" stop-color="#3d86ee"/><stop offset="1" stop-color="#1a4fc0"/></linearGradient></defs><path d="M1.5 13.5 V2.5 Q1.5 1 3 1 H6.5 L8 2.8 H13 Q14.5 2.8 14.5 4.3 V6" fill="#eaf2ff" stroke="#2a55c0" stroke-width="1"/><path d="M1 14 L2.3 6.2 Q2.5 5.3 3.5 5.3 H14.8 Q15.8 5.3 15.6 6.3 L14.5 14Z" fill="url(#g20)" stroke="#1a3fb0" stroke-width=".9"/><path d="M3 7 H14.6" stroke="#e6f0ff" stroke-width="1.3"/><path d="M2 13.2 H14.2" stroke="#fff" stroke-width="1.2"/></svg>
<div class="t" style="left:63px;top:235.7px;font-size:14.5px;color:#000;font-weight:bold;">ALTAS TFE</div>
<svg class="a" style="left:31px;top:241px;" width="9" height="6" viewBox="0 0 9 6"><path d="M0 0 H8 L4 5Z" fill="#000"/></svg>
<svg class="a" style="left:66px;top:256px;" width="16.0" height="15.0" viewBox="0 0 16 15"><defs><linearGradient id="g21" x1="0" y1="0" x2="0" y2="1"><stop offset="0" stop-color="#bcd8ff"/><stop offset=".55" stop-color="#3d86ee"/><stop offset="1" stop-color="#1a4fc0"/></linearGradient></defs><path d="M1.5 13.5 V2.5 Q1.5 1 3 1 H6.5 L8 2.8 H13 Q14.5 2.8 14.5 4.3 V6" fill="#eaf2ff" stroke="#2a55c0" stroke-width="1"/><path d="M1 14 L2.3 6.2 Q2.5 5.3 3.5 5.3 H14.8 Q15.8 5.3 15.6 6.3 L14.5 14Z" fill="url(#g21)" stroke="#1a3fb0" stroke-width=".9"/><path d="M3 7 H14.6" stroke="#e6f0ff" stroke-width="1.3"/><path d="M2 13.2 H14.2" stroke="#fff" stroke-width="1.2"/></svg>
<div class="t" style="left:83px;top:255.7px;font-size:14.5px;color:#000;letter-spacing:-0.11px;">Alt.autom</div>
<svg class="a" style="left:46px;top:276px;" width="16.0" height="15.0" viewBox="0 0 16 15"><defs><linearGradient id="g22" x1="0" y1="0" x2="0" y2="1"><stop offset="0" stop-color="#bcd8ff"/><stop offset=".55" stop-color="#3d86ee"/><stop offset="1" stop-color="#1a4fc0"/></linearGradient></defs><path d="M1.5 13.5 V2.5 Q1.5 1 3 1 H6.5 L8 2.8 H13 Q14.5 2.8 14.5 4.3 V6" fill="#eaf2ff" stroke="#2a55c0" stroke-width="1"/><path d="M1 14 L2.3 6.2 Q2.5 5.3 3.5 5.3 H14.8 Q15.8 5.3 15.6 6.3 L14.5 14Z" fill="url(#g22)" stroke="#1a3fb0" stroke-width=".9"/><path d="M3 7 H14.6" stroke="#e6f0ff" stroke-width="1.3"/><path d="M2 13.2 H14.2" stroke="#fff" stroke-width="1.2"/></svg>
<div class="t" style="left:63px;top:275.7px;font-size:14.5px;color:#000;font-weight:bold;">AVISOS</div>
<svg class="a" style="left:31px;top:281px;" width="9" height="6" viewBox="0 0 9 6"><path d="M0 0 H8 L4 5Z" fill="#000"/></svg>
<svg class="a" style="left:66px;top:296px;" width="16.0" height="15.0" viewBox="0 0 16 15"><defs><linearGradient id="g23" x1="0" y1="0" x2="0" y2="1"><stop offset="0" stop-color="#bcd8ff"/><stop offset=".55" stop-color="#3d86ee"/><stop offset="1" stop-color="#1a4fc0"/></linearGradient></defs><path d="M1.5 13.5 V2.5 Q1.5 1 3 1 H6.5 L8 2.8 H13 Q14.5 2.8 14.5 4.3 V6" fill="#eaf2ff" stroke="#2a55c0" stroke-width="1"/><path d="M1 14 L2.3 6.2 Q2.5 5.3 3.5 5.3 H14.8 Q15.8 5.3 15.6 6.3 L14.5 14Z" fill="url(#g23)" stroke="#1a3fb0" stroke-width=".9"/><path d="M3 7 H14.6" stroke="#e6f0ff" stroke-width="1.3"/><path d="M2 13.2 H14.2" stroke="#fff" stroke-width="1.2"/></svg>
<div class="t" style="left:83px;top:295.7px;font-size:14.5px;color:#000;font-weight:bold;">Av. salida</div>
<svg class="a" style="left:46px;top:316px;" width="16.0" height="15.0" viewBox="0 0 16 15"><defs><linearGradient id="g24" x1="0" y1="0" x2="0" y2="1"><stop offset="0" stop-color="#bcd8ff"/><stop offset=".55" stop-color="#3d86ee"/><stop offset="1" stop-color="#1a4fc0"/></linearGradient></defs><path d="M1.5 13.5 V2.5 Q1.5 1 3 1 H6.5 L8 2.8 H13 Q14.5 2.8 14.5 4.3 V6" fill="#eaf2ff" stroke="#2a55c0" stroke-width="1"/><path d="M1 14 L2.3 6.2 Q2.5 5.3 3.5 5.3 H14.8 Q15.8 5.3 15.6 6.3 L14.5 14Z" fill="url(#g24)" stroke="#1a3fb0" stroke-width=".9"/><path d="M3 7 H14.6" stroke="#e6f0ff" stroke-width="1.3"/><path d="M2 13.2 H14.2" stroke="#fff" stroke-width="1.2"/></svg>
<div class="t" style="left:63px;top:315.7px;font-size:14.5px;color:#000;letter-spacing:1.20px;">BAJAS</div>
<svg class="a" style="left:31px;top:321px;" width="9" height="6" viewBox="0 0 9 6"><path d="M0 0 H8 L4 5Z" fill="#000"/></svg>
<svg class="a" style="left:66px;top:336px;" width="16.0" height="15.0" viewBox="0 0 16 15"><defs><linearGradient id="g25" x1="0" y1="0" x2="0" y2="1"><stop offset="0" stop-color="#bcd8ff"/><stop offset=".55" stop-color="#3d86ee"/><stop offset="1" stop-color="#1a4fc0"/></linearGradient></defs><path d="M1.5 13.5 V2.5 Q1.5 1 3 1 H6.5 L8 2.8 H13 Q14.5 2.8 14.5 4.3 V6" fill="#eaf2ff" stroke="#2a55c0" stroke-width="1"/><path d="M1 14 L2.3 6.2 Q2.5 5.3 3.5 5.3 H14.8 Q15.8 5.3 15.6 6.3 L14.5 14Z" fill="url(#g25)" stroke="#1a3fb0" stroke-width=".9"/><path d="M3 7 H14.6" stroke="#e6f0ff" stroke-width="1.3"/><path d="M2 13.2 H14.2" stroke="#fff" stroke-width="1.2"/></svg>
<div class="t" style="left:83px;top:335.7px;font-size:14.5px;color:#000;font-weight:bold;">bajas</div>
<svg class="a" style="left:66px;top:356px;" width="16.0" height="15.0" viewBox="0 0 16 15"><defs><linearGradient id="g26" x1="0" y1="0" x2="0" y2="1"><stop offset="0" stop-color="#bcd8ff"/><stop offset=".55" stop-color="#3d86ee"/><stop offset="1" stop-color="#1a4fc0"/></linearGradient></defs><path d="M1.5 13.5 V2.5 Q1.5 1 3 1 H6.5 L8 2.8 H13 Q14.5 2.8 14.5 4.3 V6" fill="#eaf2ff" stroke="#2a55c0" stroke-width="1"/><path d="M1 14 L2.3 6.2 Q2.5 5.3 3.5 5.3 H14.8 Q15.8 5.3 15.6 6.3 L14.5 14Z" fill="url(#g26)" stroke="#1a3fb0" stroke-width=".9"/><path d="M3 7 H14.6" stroke="#e6f0ff" stroke-width="1.3"/><path d="M2 13.2 H14.2" stroke="#fff" stroke-width="1.2"/></svg>
<div class="t" style="left:83px;top:355.7px;font-size:14.5px;color:#000;font-weight:bold;">Pendientes</div>
<svg class="a" style="left:46px;top:376px;" width="16.0" height="15.0" viewBox="0 0 16 15"><defs><linearGradient id="g27" x1="0" y1="0" x2="0" y2="1"><stop offset="0" stop-color="#bcd8ff"/><stop offset=".55" stop-color="#3d86ee"/><stop offset="1" stop-color="#1a4fc0"/></linearGradient></defs><path d="M1.5 13.5 V2.5 Q1.5 1 3 1 H6.5 L8 2.8 H13 Q14.5 2.8 14.5 4.3 V6" fill="#eaf2ff" stroke="#2a55c0" stroke-width="1"/><path d="M1 14 L2.3 6.2 Q2.5 5.3 3.5 5.3 H14.8 Q15.8 5.3 15.6 6.3 L14.5 14Z" fill="url(#g27)" stroke="#1a3fb0" stroke-width=".9"/><path d="M3 7 H14.6" stroke="#e6f0ff" stroke-width="1.3"/><path d="M2 13.2 H14.2" stroke="#fff" stroke-width="1.2"/></svg>
<div class="t" style="left:63px;top:375.7px;font-size:14.5px;color:#000;font-weight:bold;">BONIFICACIONES</div>
<svg class="a" style="left:46px;top:396px;" width="16.0" height="15.0" viewBox="0 0 16 15"><defs><linearGradient id="g28" x1="0" y1="0" x2="0" y2="1"><stop offset="0" stop-color="#bcd8ff"/><stop offset=".55" stop-color="#3d86ee"/><stop offset="1" stop-color="#1a4fc0"/></linearGradient></defs><path d="M1.5 13.5 V2.5 Q1.5 1 3 1 H6.5 L8 2.8 H13 Q14.5 2.8 14.5 4.3 V6" fill="#eaf2ff" stroke="#2a55c0" stroke-width="1"/><path d="M1 14 L2.3 6.2 Q2.5 5.3 3.5 5.3 H14.8 Q15.8 5.3 15.6 6.3 L14.5 14Z" fill="url(#g28)" stroke="#1a3fb0" stroke-width=".9"/><path d="M3 7 H14.6" stroke="#e6f0ff" stroke-width="1.3"/><path d="M2 13.2 H14.2" stroke="#fff" stroke-width="1.2"/></svg>
<div class="t" style="left:63px;top:395.7px;font-size:14.5px;color:#000;font-weight:bold;">BORRADORES</div>
<svg class="a" style="left:46px;top:416px;" width="16.0" height="15.0" viewBox="0 0 16 15"><defs><linearGradient id="g29" x1="0" y1="0" x2="0" y2="1"><stop offset="0" stop-color="#bcd8ff"/><stop offset=".55" stop-color="#3d86ee"/><stop offset="1" stop-color="#1a4fc0"/></linearGradient></defs><path d="M1.5 13.5 V2.5 Q1.5 1 3 1 H6.5 L8 2.8 H13 Q14.5 2.8 14.5 4.3 V6" fill="#eaf2ff" stroke="#2a55c0" stroke-width="1"/><path d="M1 14 L2.3 6.2 Q2.5 5.3 3.5 5.3 H14.8 Q15.8 5.3 15.6 6.3 L14.5 14Z" fill="url(#g29)" stroke="#1a3fb0" stroke-width=".9"/><path d="M3 7 H14.6" stroke="#e6f0ff" stroke-width="1.3"/><path d="M2 13.2 H14.2" stroke="#fff" stroke-width="1.2"/></svg>
<div class="t" style="left:63px;top:415.7px;font-size:14.5px;color:#000;font-weight:bold;">CLIENTES</div>
<svg class="a" style="left:31px;top:421px;" width="9" height="6" viewBox="0 0 9 6"><path d="M0 0 H8 L4 5Z" fill="#000"/></svg>
<svg class="a" style="left:66px;top:436px;" width="16.0" height="15.0" viewBox="0 0 16 15"><defs><linearGradient id="g30" x1="0" y1="0" x2="0" y2="1"><stop offset="0" stop-color="#bcd8ff"/><stop offset=".55" stop-color="#3d86ee"/><stop offset="1" stop-color="#1a4fc0"/></linearGradient></defs><path d="M1.5 13.5 V2.5 Q1.5 1 3 1 H6.5 L8 2.8 H13 Q14.5 2.8 14.5 4.3 V6" fill="#eaf2ff" stroke="#2a55c0" stroke-width="1"/><path d="M1 14 L2.3 6.2 Q2.5 5.3 3.5 5.3 H14.8 Q15.8 5.3 15.6 6.3 L14.5 14Z" fill="url(#g30)" stroke="#1a3fb0" stroke-width=".9"/><path d="M3 7 H14.6" stroke="#e6f0ff" stroke-width="1.3"/><path d="M2 13.2 H14.2" stroke="#fff" stroke-width="1.2"/></svg>
<div class="t" style="left:83px;top:435.7px;font-size:14.5px;color:#000;font-weight:bold;">Consultas</div>
<svg class="a" style="left:66px;top:456px;" width="16.0" height="15.0" viewBox="0 0 16 15"><defs><linearGradient id="g31" x1="0" y1="0" x2="0" y2="1"><stop offset="0" stop-color="#bcd8ff"/><stop offset=".55" stop-color="#3d86ee"/><stop offset="1" stop-color="#1a4fc0"/></linearGradient></defs><path d="M1.5 13.5 V2.5 Q1.5 1 3 1 H6.5 L8 2.8 H13 Q14.5 2.8 14.5 4.3 V6" fill="#eaf2ff" stroke="#2a55c0" stroke-width="1"/><path d="M1 14 L2.3 6.2 Q2.5 5.3 3.5 5.3 H14.8 Q15.8 5.3 15.6 6.3 L14.5 14Z" fill="url(#g31)" stroke="#1a3fb0" stroke-width=".9"/><path d="M3 7 H14.6" stroke="#e6f0ff" stroke-width="1.3"/><path d="M2 13.2 H14.2" stroke="#fff" stroke-width="1.2"/></svg>
<div class="t" style="left:83px;top:455.7px;font-size:14.5px;color:#000;font-weight:bold;">Consumos</div>
<svg class="a" style="left:66px;top:476px;" width="16.0" height="15.0" viewBox="0 0 16 15"><defs><linearGradient id="g32" x1="0" y1="0" x2="0" y2="1"><stop offset="0" stop-color="#bcd8ff"/><stop offset=".55" stop-color="#3d86ee"/><stop offset="1" stop-color="#1a4fc0"/></linearGradient></defs><path d="M1.5 13.5 V2.5 Q1.5 1 3 1 H6.5 L8 2.8 H13 Q14.5 2.8 14.5 4.3 V6" fill="#eaf2ff" stroke="#2a55c0" stroke-width="1"/><path d="M1 14 L2.3 6.2 Q2.5 5.3 3.5 5.3 H14.8 Q15.8 5.3 15.6 6.3 L14.5 14Z" fill="url(#g32)" stroke="#1a3fb0" stroke-width=".9"/><path d="M3 7 H14.6" stroke="#e6f0ff" stroke-width="1.3"/><path d="M2 13.2 H14.2" stroke="#fff" stroke-width="1.2"/></svg>
<div class="t" style="left:83px;top:475.7px;font-size:14.5px;color:#000;font-weight:bold;">Contestados</div>
<svg class="a" style="left:66px;top:496px;" width="16.0" height="15.0" viewBox="0 0 16 15"><defs><linearGradient id="g33" x1="0" y1="0" x2="0" y2="1"><stop offset="0" stop-color="#bcd8ff"/><stop offset=".55" stop-color="#3d86ee"/><stop offset="1" stop-color="#1a4fc0"/></linearGradient></defs><path d="M1.5 13.5 V2.5 Q1.5 1 3 1 H6.5 L8 2.8 H13 Q14.5 2.8 14.5 4.3 V6" fill="#eaf2ff" stroke="#2a55c0" stroke-width="1"/><path d="M1 14 L2.3 6.2 Q2.5 5.3 3.5 5.3 H14.8 Q15.8 5.3 15.6 6.3 L14.5 14Z" fill="url(#g33)" stroke="#1a3fb0" stroke-width=".9"/><path d="M3 7 H14.6" stroke="#e6f0ff" stroke-width="1.3"/><path d="M2 13.2 H14.2" stroke="#fff" stroke-width="1.2"/></svg>
<div class="t" style="left:83px;top:495.7px;font-size:14.5px;color:#000;letter-spacing:-0.47px;">Envio</div>
<svg class="a" style="left:66px;top:516px;" width="16.0" height="15.0" viewBox="0 0 16 15"><defs><linearGradient id="g34" x1="0" y1="0" x2="0" y2="1"><stop offset="0" stop-color="#bcd8ff"/><stop offset=".55" stop-color="#3d86ee"/><stop offset="1" stop-color="#1a4fc0"/></linearGradient></defs><path d="M1.5 13.5 V2.5 Q1.5 1 3 1 H6.5 L8 2.8 H13 Q14.5 2.8 14.5 4.3 V6" fill="#eaf2ff" stroke="#2a55c0" stroke-width="1"/><path d="M1 14 L2.3 6.2 Q2.5 5.3 3.5 5.3 H14.8 Q15.8 5.3 15.6 6.3 L14.5 14Z" fill="url(#g34)" stroke="#1a3fb0" stroke-width=".9"/><path d="M3 7 H14.6" stroke="#e6f0ff" stroke-width="1.3"/><path d="M2 13.2 H14.2" stroke="#fff" stroke-width="1.2"/></svg>
<div class="t" style="left:83px;top:515.7px;font-size:14.5px;color:#000;font-weight:bold;">Grabaciones</div>
<svg class="a" style="left:66px;top:536px;" width="16.0" height="15.0" viewBox="0 0 16 15"><defs><linearGradient id="g35" x1="0" y1="0" x2="0" y2="1"><stop offset="0" stop-color="#bcd8ff"/><stop offset=".55" stop-color="#3d86ee"/><stop offset="1" stop-color="#1a4fc0"/></linearGradient></defs><path d="M1.5 13.5 V2.5 Q1.5 1 3 1 H6.5 L8 2.8 H13 Q14.5 2.8 14.5 4.3 V6" fill="#eaf2ff" stroke="#2a55c0" stroke-width="1"/><path d="M1 14 L2.3 6.2 Q2.5 5.3 3.5 5.3 H14.8 Q15.8 5.3 15.6 6.3 L14.5 14Z" fill="url(#g35)" stroke="#1a3fb0" stroke-width=".9"/><path d="M3 7 H14.6" stroke="#e6f0ff" stroke-width="1.3"/><path d="M2 13.2 H14.2" stroke="#fff" stroke-width="1.2"/></svg>
<div class="t" style="left:83px;top:535.7px;font-size:14.5px;color:#000;font-weight:bold;">Resueltos</div>
<svg class="a" style="left:46px;top:556px;" width="16.0" height="15.0" viewBox="0 0 16 15"><defs><linearGradient id="g36" x1="0" y1="0" x2="0" y2="1"><stop offset="0" stop-color="#bcd8ff"/><stop offset=".55" stop-color="#3d86ee"/><stop offset="1" stop-color="#1a4fc0"/></linearGradient></defs><path d="M1.5 13.5 V2.5 Q1.5 1 3 1 H6.5 L8 2.8 H13 Q14.5 2.8 14.5 4.3 V6" fill="#eaf2ff" stroke="#2a55c0" stroke-width="1"/><path d="M1 14 L2.3 6.2 Q2.5 5.3 3.5 5.3 H14.8 Q15.8 5.3 15.6 6.3 L14.5 14Z" fill="url(#g36)" stroke="#1a3fb0" stroke-width=".9"/><path d="M3 7 H14.6" stroke="#e6f0ff" stroke-width="1.3"/><path d="M2 13.2 H14.2" stroke="#fff" stroke-width="1.2"/></svg>
<div class="t" style="left:63px;top:555.7px;font-size:14.5px;color:#000;font-weight:bold;">COMUNICADOS</div>
<svg class="a" style="left:46px;top:576px;" width="16.0" height="15.0" viewBox="0 0 16 15"><defs><linearGradient id="g37" x1="0" y1="0" x2="0" y2="1"><stop offset="0" stop-color="#bcd8ff"/><stop offset=".55" stop-color="#3d86ee"/><stop offset="1" stop-color="#1a4fc0"/></linearGradient></defs><path d="M1.5 13.5 V2.5 Q1.5 1 3 1 H6.5 L8 2.8 H13 Q14.5 2.8 14.5 4.3 V6" fill="#eaf2ff" stroke="#2a55c0" stroke-width="1"/><path d="M1 14 L2.3 6.2 Q2.5 5.3 3.5 5.3 H14.8 Q15.8 5.3 15.6 6.3 L14.5 14Z" fill="url(#g37)" stroke="#1a3fb0" stroke-width=".9"/><path d="M3 7 H14.6" stroke="#e6f0ff" stroke-width="1.3"/><path d="M2 13.2 H14.2" stroke="#fff" stroke-width="1.2"/></svg>
<div class="t" style="left:63px;top:575.7px;font-size:14.5px;color:#000;font-weight:bold;">CONTABILIDAD</div>
<svg class="a" style="left:46px;top:596px;" width="16.0" height="15.0" viewBox="0 0 16 15"><defs><linearGradient id="g38" x1="0" y1="0" x2="0" y2="1"><stop offset="0" stop-color="#bcd8ff"/><stop offset=".55" stop-color="#3d86ee"/><stop offset="1" stop-color="#1a4fc0"/></linearGradient></defs><path d="M1.5 13.5 V2.5 Q1.5 1 3 1 H6.5 L8 2.8 H13 Q14.5 2.8 14.5 4.3 V6" fill="#eaf2ff" stroke="#2a55c0" stroke-width="1"/><path d="M1 14 L2.3 6.2 Q2.5 5.3 3.5 5.3 H14.8 Q15.8 5.3 15.6 6.3 L14.5 14Z" fill="url(#g38)" stroke="#1a3fb0" stroke-width=".9"/><path d="M3 7 H14.6" stroke="#e6f0ff" stroke-width="1.3"/><path d="M2 13.2 H14.2" stroke="#fff" stroke-width="1.2"/></svg>
<div class="t" style="left:63px;top:595.7px;font-size:14.5px;color:#000;font-weight:bold;">CONTRATOS</div>
<svg class="a" style="left:31px;top:601px;" width="9" height="6" viewBox="0 0 9 6"><path d="M0 0 H8 L4 5Z" fill="#000"/></svg>
<svg class="a" style="left:66px;top:616px;" width="16.0" height="15.0" viewBox="0 0 16 15"><defs><linearGradient id="g39" x1="0" y1="0" x2="0" y2="1"><stop offset="0" stop-color="#bcd8ff"/><stop offset=".55" stop-color="#3d86ee"/><stop offset="1" stop-color="#1a4fc0"/></linearGradient></defs><path d="M1.5 13.5 V2.5 Q1.5 1 3 1 H6.5 L8 2.8 H13 Q14.5 2.8 14.5 4.3 V6" fill="#eaf2ff" stroke="#2a55c0" stroke-width="1"/><path d="M1 14 L2.3 6.2 Q2.5 5.3 3.5 5.3 H14.8 Q15.8 5.3 15.6 6.3 L14.5 14Z" fill="url(#g39)" stroke="#1a3fb0" stroke-width=".9"/><path d="M3 7 H14.6" stroke="#e6f0ff" stroke-width="1.3"/><path d="M2 13.2 H14.2" stroke="#fff" stroke-width="1.2"/></svg>
<div class="t" style="left:83px;top:615.7px;font-size:14.5px;color:#000;font-weight:bold;">Grabados</div>
<svg class="a" style="left:66px;top:636px;" width="16.0" height="15.0" viewBox="0 0 16 15"><defs><linearGradient id="g40" x1="0" y1="0" x2="0" y2="1"><stop offset="0" stop-color="#bcd8ff"/><stop offset=".55" stop-color="#3d86ee"/><stop offset="1" stop-color="#1a4fc0"/></linearGradient></defs><path d="M1.5 13.5 V2.5 Q1.5 1 3 1 H6.5 L8 2.8 H13 Q14.5 2.8 14.5 4.3 V6" fill="#eaf2ff" stroke="#2a55c0" stroke-width="1"/><path d="M1 14 L2.3 6.2 Q2.5 5.3 3.5 5.3 H14.8 Q15.8 5.3 15.6 6.3 L14.5 14Z" fill="url(#g40)" stroke="#1a3fb0" stroke-width=".9"/><path d="M3 7 H14.6" stroke="#e6f0ff" stroke-width="1.3"/><path d="M2 13.2 H14.2" stroke="#fff" stroke-width="1.2"/></svg>
<div class="t" style="left:83px;top:635.7px;font-size:14.5px;color:#000;font-weight:bold;">Incidencias</div>
<svg class="a" style="left:46px;top:656px;" width="16.0" height="15.0" viewBox="0 0 16 15"><defs><linearGradient id="g41" x1="0" y1="0" x2="0" y2="1"><stop offset="0" stop-color="#bcd8ff"/><stop offset=".55" stop-color="#3d86ee"/><stop offset="1" stop-color="#1a4fc0"/></linearGradient></defs><path d="M1.5 13.5 V2.5 Q1.5 1 3 1 H6.5 L8 2.8 H13 Q14.5 2.8 14.5 4.3 V6" fill="#eaf2ff" stroke="#2a55c0" stroke-width="1"/><path d="M1 14 L2.3 6.2 Q2.5 5.3 3.5 5.3 H14.8 Q15.8 5.3 15.6 6.3 L14.5 14Z" fill="url(#g41)" stroke="#1a3fb0" stroke-width=".9"/><path d="M3 7 H14.6" stroke="#e6f0ff" stroke-width="1.3"/><path d="M2 13.2 H14.2" stroke="#fff" stroke-width="1.2"/></svg>
<div class="t" style="left:63px;top:655.7px;font-size:14.5px;color:#000;font-weight:bold;">CORREOS</div>
<svg class="a" style="left:46px;top:676px;" width="16.0" height="15.0" viewBox="0 0 16 15"><defs><linearGradient id="g42" x1="0" y1="0" x2="0" y2="1"><stop offset="0" stop-color="#bcd8ff"/><stop offset=".55" stop-color="#3d86ee"/><stop offset="1" stop-color="#1a4fc0"/></linearGradient></defs><path d="M1.5 13.5 V2.5 Q1.5 1 3 1 H6.5 L8 2.8 H13 Q14.5 2.8 14.5 4.3 V6" fill="#eaf2ff" stroke="#2a55c0" stroke-width="1"/><path d="M1 14 L2.3 6.2 Q2.5 5.3 3.5 5.3 H14.8 Q15.8 5.3 15.6 6.3 L14.5 14Z" fill="url(#g42)" stroke="#1a3fb0" stroke-width=".9"/><path d="M3 7 H14.6" stroke="#e6f0ff" stroke-width="1.3"/><path d="M2 13.2 H14.2" stroke="#fff" stroke-width="1.2"/></svg>
<div class="t" style="left:63px;top:675.7px;font-size:14.5px;color:#000;font-weight:bold;">DOMICILIACION</div>
<svg class="a" style="left:31px;top:681px;" width="9" height="6" viewBox="0 0 9 6"><path d="M0 0 H8 L4 5Z" fill="#000"/></svg>
<svg class="a" style="left:66px;top:696px;" width="16.0" height="15.0" viewBox="0 0 16 15"><defs><linearGradient id="g43" x1="0" y1="0" x2="0" y2="1"><stop offset="0" stop-color="#bcd8ff"/><stop offset=".55" stop-color="#3d86ee"/><stop offset="1" stop-color="#1a4fc0"/></linearGradient></defs><path d="M1.5 13.5 V2.5 Q1.5 1 3 1 H6.5 L8 2.8 H13 Q14.5 2.8 14.5 4.3 V6" fill="#eaf2ff" stroke="#2a55c0" stroke-width="1"/><path d="M1 14 L2.3 6.2 Q2.5 5.3 3.5 5.3 H14.8 Q15.8 5.3 15.6 6.3 L14.5 14Z" fill="url(#g43)" stroke="#1a3fb0" stroke-width=".9"/><path d="M3 7 H14.6" stroke="#e6f0ff" stroke-width="1.3"/><path d="M2 13.2 H14.2" stroke="#fff" stroke-width="1.2"/></svg>
<div class="t" style="left:83px;top:695.7px;font-size:14.5px;color:#000;letter-spacing:-0.77px;">Devueltos</div>
<svg class="a" style="left:66px;top:716px;" width="16.0" height="15.0" viewBox="0 0 16 15"><defs><linearGradient id="g44" x1="0" y1="0" x2="0" y2="1"><stop offset="0" stop-color="#bcd8ff"/><stop offset=".55" stop-color="#3d86ee"/><stop offset="1" stop-color="#1a4fc0"/></linearGradient></defs><path d="M1.5 13.5 V2.5 Q1.5 1 3 1 H6.5 L8 2.8 H13 Q14.5 2.8 14.5 4.3 V6" fill="#eaf2ff" stroke="#2a55c0" stroke-width="1"/><path d="M1 14 L2.3 6.2 Q2.5 5.3 3.5 5.3 H14.8 Q15.8 5.3 15.6 6.3 L14.5 14Z" fill="url(#g44)" stroke="#1a3fb0" stroke-width=".9"/><path d="M3 7 H14.6" stroke="#e6f0ff" stroke-width="1.3"/><path d="M2 13.2 H14.2" stroke="#fff" stroke-width="1.2"/></svg>
<div class="t" style="left:83px;top:715.7px;font-size:14.5px;color:#000;font-weight:bold;">Rechazados</div>
<svg class="a" style="left:46px;top:736px;" width="16.0" height="15.0" viewBox="0 0 16 15"><defs><linearGradient id="g45" x1="0" y1="0" x2="0" y2="1"><stop offset="0" stop-color="#bcd8ff"/><stop offset=".55" stop-color="#3d86ee"/><stop offset="1" stop-color="#1a4fc0"/></linearGradient></defs><path d="M1.5 13.5 V2.5 Q1.5 1 3 1 H6.5 L8 2.8 H13 Q14.5 2.8 14.5 4.3 V6" fill="#eaf2ff" stroke="#2a55c0" stroke-width="1"/><path d="M1 14 L2.3 6.2 Q2.5 5.3 3.5 5.3 H14.8 Q15.8 5.3 15.6 6.3 L14.5 14Z" fill="url(#g45)" stroke="#1a3fb0" stroke-width=".9"/><path d="M3 7 H14.6" stroke="#e6f0ff" stroke-width="1.3"/><path d="M2 13.2 H14.2" stroke="#fff" stroke-width="1.2"/></svg>
<div class="t" style="left:63px;top:735.7px;font-size:14.5px;color:#000;font-weight:bold;">FACTURAS</div>
<svg class="a" style="left:46px;top:756px;" width="16.0" height="15.0" viewBox="0 0 16 15"><defs><linearGradient id="g46" x1="0" y1="0" x2="0" y2="1"><stop offset="0" stop-color="#bcd8ff"/><stop offset=".55" stop-color="#3d86ee"/><stop offset="1" stop-color="#1a4fc0"/></linearGradient></defs><path d="M1.5 13.5 V2.5 Q1.5 1 3 1 H6.5 L8 2.8 H13 Q14.5 2.8 14.5 4.3 V6" fill="#eaf2ff" stroke="#2a55c0" stroke-width="1"/><path d="M1 14 L2.3 6.2 Q2.5 5.3 3.5 5.3 H14.8 Q15.8 5.3 15.6 6.3 L14.5 14Z" fill="url(#g46)" stroke="#1a3fb0" stroke-width=".9"/><path d="M3 7 H14.6" stroke="#e6f0ff" stroke-width="1.3"/><path d="M2 13.2 H14.2" stroke="#fff" stroke-width="1.2"/></svg>
<div class="t" style="left:63px;top:755.7px;font-size:14.5px;color:#000;font-weight:bold;">FAX RECIBIDOS</div>
<svg class="a" style="left:31px;top:761px;" width="9" height="6" viewBox="0 0 9 6"><path d="M0 0 H8 L4 5Z" fill="#000"/></svg>
<svg class="a" style="left:66px;top:776px;" width="16.0" height="15.0" viewBox="0 0 16 15"><defs><linearGradient id="g47" x1="0" y1="0" x2="0" y2="1"><stop offset="0" stop-color="#bcd8ff"/><stop offset=".55" stop-color="#3d86ee"/><stop offset="1" stop-color="#1a4fc0"/></linearGradient></defs><path d="M1.5 13.5 V2.5 Q1.5 1 3 1 H6.5 L8 2.8 H13 Q14.5 2.8 14.5 4.3 V6" fill="#eaf2ff" stroke="#2a55c0" stroke-width="1"/><path d="M1 14 L2.3 6.2 Q2.5 5.3 3.5 5.3 H14.8 Q15.8 5.3 15.6 6.3 L14.5 14Z" fill="url(#g47)" stroke="#1a3fb0" stroke-width=".9"/><path d="M3 7 H14.6" stroke="#e6f0ff" stroke-width="1.3"/><path d="M2 13.2 H14.2" stroke="#fff" stroke-width="1.2"/></svg>
<div class="t" style="left:83px;top:775.7px;font-size:14.5px;color:#000;font-weight:bold;">Documentos</div>
<svg class="a" style="left:66px;top:796px;" width="16.0" height="15.0" viewBox="0 0 16 15"><defs><linearGradient id="g48" x1="0" y1="0" x2="0" y2="1"><stop offset="0" stop-color="#bcd8ff"/><stop offset=".55" stop-color="#3d86ee"/><stop offset="1" stop-color="#1a4fc0"/></linearGradient></defs><path d="M1.5 13.5 V2.5 Q1.5 1 3 1 H6.5 L8 2.8 H13 Q14.5 2.8 14.5 4.3 V6" fill="#eaf2ff" stroke="#2a55c0" stroke-width="1"/><path d="M1 14 L2.3 6.2 Q2.5 5.3 3.5 5.3 H14.8 Q15.8 5.3 15.6 6.3 L14.5 14Z" fill="url(#g48)" stroke="#1a3fb0" stroke-width=".9"/><path d="M3 7 H14.6" stroke="#e6f0ff" stroke-width="1.3"/><path d="M2 13.2 H14.2" stroke="#fff" stroke-width="1.2"/></svg>
<div class="t" style="left:83px;top:795.7px;font-size:14.5px;color:#000;font-weight:bold;">Requerimientos</div>
<svg class="a" style="left:46px;top:816px;" width="16.0" height="15.0" viewBox="0 0 16 15"><defs><linearGradient id="g49" x1="0" y1="0" x2="0" y2="1"><stop offset="0" stop-color="#bcd8ff"/><stop offset=".55" stop-color="#3d86ee"/><stop offset="1" stop-color="#1a4fc0"/></linearGradient></defs><path d="M1.5 13.5 V2.5 Q1.5 1 3 1 H6.5 L8 2.8 H13 Q14.5 2.8 14.5 4.3 V6" fill="#eaf2ff" stroke="#2a55c0" stroke-width="1"/><path d="M1 14 L2.3 6.2 Q2.5 5.3 3.5 5.3 H14.8 Q15.8 5.3 15.6 6.3 L14.5 14Z" fill="url(#g49)" stroke="#1a3fb0" stroke-width=".9"/><path d="M3 7 H14.6" stroke="#e6f0ff" stroke-width="1.3"/><path d="M2 13.2 H14.2" stroke="#fff" stroke-width="1.2"/></svg>
<div class="t" style="left:63px;top:815.7px;font-size:14.5px;color:#000;letter-spacing:0.44px;">MI OFICINA</div>
<svg class="a" style="left:31px;top:821px;" width="9" height="6" viewBox="0 0 9 6"><path d="M0 0 H8 L4 5Z" fill="#000"/></svg>
<svg class="a" style="left:66px;top:836px;" width="16.0" height="15.0" viewBox="0 0 16 15"><defs><linearGradient id="g50" x1="0" y1="0" x2="0" y2="1"><stop offset="0" stop-color="#bcd8ff"/><stop offset=".55" stop-color="#3d86ee"/><stop offset="1" stop-color="#1a4fc0"/></linearGradient></defs><path d="M1.5 13.5 V2.5 Q1.5 1 3 1 H6.5 L8 2.8 H13 Q14.5 2.8 14.5 4.3 V6" fill="#eaf2ff" stroke="#2a55c0" stroke-width="1"/><path d="M1 14 L2.3 6.2 Q2.5 5.3 3.5 5.3 H14.8 Q15.8 5.3 15.6 6.3 L14.5 14Z" fill="url(#g50)" stroke="#1a3fb0" stroke-width=".9"/><path d="M3 7 H14.6" stroke="#e6f0ff" stroke-width="1.3"/><path d="M2 13.2 H14.2" stroke="#fff" stroke-width="1.2"/></svg>
<div class="t" style="left:83px;top:835.7px;font-size:14.5px;color:#000;">1º contacto</div>
<svg class="a" style="left:51px;top:841px;" width="9" height="6" viewBox="0 0 9 6"><path d="M0 0 H8 L4 5Z" fill="#000"/></svg>
<svg class="a" style="left:86px;top:856px;" width="16.0" height="15.0" viewBox="0 0 16 15"><defs><linearGradient id="g51" x1="0" y1="0" x2="0" y2="1"><stop offset="0" stop-color="#bcd8ff"/><stop offset=".55" stop-color="#3d86ee"/><stop offset="1" stop-color="#1a4fc0"/></linearGradient></defs><path d="M1.5 13.5 V2.5 Q1.5 1 3 1 H6.5 L8 2.8 H13 Q14.5 2.8 14.5 4.3 V6" fill="#eaf2ff" stroke="#2a55c0" stroke-width="1"/><path d="M1 14 L2.3 6.2 Q2.5 5.3 3.5 5.3 H14.8 Q15.8 5.3 15.6 6.3 L14.5 14Z" fill="url(#g51)" stroke="#1a3fb0" stroke-width=".9"/><path d="M3 7 H14.6" stroke="#e6f0ff" stroke-width="1.3"/><path d="M2 13.2 H14.2" stroke="#fff" stroke-width="1.2"/></svg>
<div class="t" style="left:103px;top:855.7px;font-size:14.5px;color:#000;font-weight:bold;">acuerdos</div>
<svg class="a" style="left:86px;top:876px;" width="16.0" height="15.0" viewBox="0 0 16 15"><defs><linearGradient id="g52" x1="0" y1="0" x2="0" y2="1"><stop offset="0" stop-color="#bcd8ff"/><stop offset=".55" stop-color="#3d86ee"/><stop offset="1" stop-color="#1a4fc0"/></linearGradient></defs><path d="M1.5 13.5 V2.5 Q1.5 1 3 1 H6.5 L8 2.8 H13 Q14.5 2.8 14.5 4.3 V6" fill="#eaf2ff" stroke="#2a55c0" stroke-width="1"/><path d="M1 14 L2.3 6.2 Q2.5 5.3 3.5 5.3 H14.8 Q15.8 5.3 15.6 6.3 L14.5 14Z" fill="url(#g52)" stroke="#1a3fb0" stroke-width=".9"/><path d="M3 7 H14.6" stroke="#e6f0ff" stroke-width="1.3"/><path d="M2 13.2 H14.2" stroke="#fff" stroke-width="1.2"/></svg>
<div class="t" style="left:103px;top:875.7px;font-size:14.5px;color:#000;font-weight:bold;">Contratos</div>
<svg class="a" style="left:66px;top:896px;" width="16.0" height="15.0" viewBox="0 0 16 15"><defs><linearGradient id="g53" x1="0" y1="0" x2="0" y2="1"><stop offset="0" stop-color="#bcd8ff"/><stop offset=".55" stop-color="#3d86ee"/><stop offset="1" stop-color="#1a4fc0"/></linearGradient></defs><path d="M1.5 13.5 V2.5 Q1.5 1 3 1 H6.5 L8 2.8 H13 Q14.5 2.8 14.5 4.3 V6" fill="#eaf2ff" stroke="#2a55c0" stroke-width="1"/><path d="M1 14 L2.3 6.2 Q2.5 5.3 3.5 5.3 H14.8 Q15.8 5.3 15.6 6.3 L14.5 14Z" fill="url(#g53)" stroke="#1a3fb0" stroke-width=".9"/><path d="M3 7 H14.6" stroke="#e6f0ff" stroke-width="1.3"/><path d="M2 13.2 H14.2" stroke="#fff" stroke-width="1.2"/></svg>
<div class="t" style="left:83px;top:895.7px;font-size:14.5px;color:#000;font-weight:bold;">Bajas</div>
<svg class="a" style="left:66px;top:916px;" width="16.0" height="15.0" viewBox="0 0 16 15"><defs><linearGradient id="g54" x1="0" y1="0" x2="0" y2="1"><stop offset="0" stop-color="#bcd8ff"/><stop offset=".55" stop-color="#3d86ee"/><stop offset="1" stop-color="#1a4fc0"/></linearGradient></defs><path d="M1.5 13.5 V2.5 Q1.5 1 3 1 H6.5 L8 2.8 H13 Q14.5 2.8 14.5 4.3 V6" fill="#eaf2ff" stroke="#2a55c0" stroke-width="1"/><path d="M1 14 L2.3 6.2 Q2.5 5.3 3.5 5.3 H14.8 Q15.8 5.3 15.6 6.3 L14.5 14Z" fill="url(#g54)" stroke="#1a3fb0" stroke-width=".9"/><path d="M3 7 H14.6" stroke="#e6f0ff" stroke-width="1.3"/><path d="M2 13.2 H14.2" stroke="#fff" stroke-width="1.2"/></svg>
<div class="t" style="left:83px;top:915.7px;font-size:14.5px;color:#000;font-weight:bold;">Consultas</div>
<svg class="a" style="left:53px;top:919px;" width="6" height="9" viewBox="0 0 6 9"><path d="M0 0 V8 L5 4Z" fill="#000"/></svg>
<div class="t" style="left:293px;top:915.7px;font-size:14.5px;color:#000;letter-spacing:0.07px;">0 B</div>
<div class="a" style="left:381px;top:194px;width:14px;height:737px;background:#dcdfe9;border-left:1px solid #b4b8c8"></div>
<div class="a" style="left:381px;top:915px;width:14px;height:16px;background:linear-gradient(#fbfbfd,#e4e4ea);border:1px solid #a9adc0;border-radius:0 0 3px 3px"></div>
<svg class="a" style="left:384px;top:920px;" width="8" height="6" viewBox="0 0 8 6"><path d="M0 0 H8 L4 5Z" fill="#000"/></svg>
<div class="a" style="left:4px;top:931px;width:377px;height:16px;background:#e3e5ee;border-top:1px solid #b4b8c8;border-radius:0 0 0 3px"></div>
<div class="a" style="left:381px;top:931px;width:14px;height:16px;background:#eeeef2"></div>
<div class="a" style="left:5px;top:932px;width:14px;height:14px;background:linear-gradient(#fbfbfd,#e4e4ea);border:1px solid #a9adc0;border-radius:3px 0 0 3px"></div>
<svg class="a" style="left:9px;top:935px;" width="6" height="8" viewBox="0 0 6 8"><path d="M5 0 V8 L0 4Z" fill="#000"/></svg>
<div class="a" style="left:19px;top:932px;width:318px;height:14px;background:linear-gradient(#9ab2e2,#86a2da 50%,#7f9cd6);border:1px solid #6f88c0"></div>
<div class="a" style="left:174px;top:936px;width:1px;height:6px;background:#5069a5"></div>
<div class="a" style="left:176px;top:936px;width:1px;height:6px;background:#5069a5"></div>
<div class="a" style="left:178px;top:936px;width:1px;height:6px;background:#5069a5"></div>
<div class="a" style="left:337px;top:932px;width:14px;height:14px;background:#d0d4e2"></div>
<div class="a" style="left:351px;top:932px;width:14px;height:14px;background:linear-gradient(#fbfbfd,#e4e4ea);border:1px solid #a9adc0"></div>
<svg class="a" style="left:355px;top:935px;" width="6" height="8" viewBox="0 0 6 8"><path d="M5 0 V8 L0 4Z" fill="#000"/></svg>
<div class="a" style="left:365px;top:932px;width:15px;height:14px;background:linear-gradient(#fbfbfd,#e4e4ea);border:1px solid #a9adc0;border-radius:0 3px 3px 0"></div>
<svg class="a" style="left:370px;top:935px;" width="6" height="8" viewBox="0 0 6 8"><path d="M0 0 V8 L5 4Z" fill="#000"/></svg>
<div class="a" style="left:404px;top:120px;width:689px;height:780px;border:1px solid #a9adc0;border-radius:4px;background:#fff"></div>
<div class="a" style="left:404px;top:903px;width:689px;height:45px;border:1px solid #a9adc0;border-radius:4px;background:#fff;overflow:hidden"></div>
<div class="a" style="left:405px;top:904px;width:17px;height:43px;background:#c2c2c2"></div>
<div class="a" style="left:405px;top:904px;width:671px;height:43px;overflow:hidden"><div class="t" style="left:27px;top:-5.3px;font-size:14.5px;color:#000;">Para: Juan José Gardeta</div>
<div class="t" style="left:27px;top:14.7px;font-size:14.5px;color:#000;letter-spacing:0.10px;">Asunto: Re: Remitiendo documento que quiero enviar. El programa es Outlook 2007</div>
<div class="t" style="left:27px;top:34.7px;font-size:14.5px;color:#000;letter-spacing:0.13px;">desde Windows Vista</div>
</div><div class="a" style="left:1076px;top:904px;width:16px;height:43px;background:#dcdfe9;border-left:1px solid #b4b8c8"></div>
<div class="a" style="left:1077px;top:916px;width:15px;height:15px;background:linear-gradient(#fbfbfd,#e4e4ea);border:1px solid #a9adc0"></div>
<svg class="a" style="left:1081px;top:920px;" width="8" height="6" viewBox="0 0 8 6"><path d="M4 0 L8 5 L0 5Z" fill="#000"/></svg>
<div class="a" style="left:1077px;top:931px;width:15px;height:15px;background:linear-gradient(#fbfbfd,#e4e4ea);border:1px solid #a9adc0;border-radius:0 0 3px 3px"></div>
<svg class="a" style="left:1081px;top:936px;" width="8" height="6" viewBox="0 0 8 6"><path d="M0 0 H8 L4 5Z" fill="#000"/></svg>
<div class="t" style="left:11px;top:954.4px;font-size:14.5px;letter-spacing:0.20px;">[16:01:54] Transmisión completa para la cuenta Duocom.es. 2 mensajes en 2 KB.</div>
<div class="a" style="left:0px;top:0px;width:2px;height:976px;background:linear-gradient(90deg,#8a92b6,#c9cde0)"></div>
<div class="a" style="left:1094px;top:0px;width:2px;height:976px;background:linear-gradient(90deg,#c9cde0,#8a92b6)"></div>
<div class="a" style="left:0px;top:974px;width:1096px;height:2px;background:linear-gradient(#c4c8da,#8a92b6)"></div>
<div class="a" style="left:126px;top:116px;width:1030px;height:795px;background:#5a8ef0;border-radius:6px 6px 0 0"></div>
<div class="a" style="left:126px;top:116px;width:1030px;height:24px;border-radius:6px 6px 0 0;background:linear-gradient(#bcd4fc 0,#bcd4fc 1px,#9fbdf6 3px,#7fa4f0 7px,#5c8bea 11px,#4a7be4 13px,#4575e0 16px,#4f82e8 19px,#66a0f6 23px);border:1px solid #6a62b0;border-bottom:none"></div>
<div class="a" style="left:129px;top:139px;width:1024px;height:1px;background:#2c3c7c"></div>
<div class="a" style="left:132px;top:117px;width:28px;height:20px;border:1px solid #3c5fb8;border-top:none;border-radius:0 0 6px 6px;background:linear-gradient(#86a6ec,#6a8fe2 50%,#7d9ae0)"></div>
<svg class="a" style="left:137px;top:119px;" width="19" height="17" viewBox="0 0 19 17"><path d="M3.5 2 L15.5 16 M15.5 2 L3.5 16" stroke="#c4c8d8" stroke-width="4.2"/><path d="M3.5 2 L15.5 16 M15.5 2 L3.5 16" stroke="#55555c" stroke-width="2.4"/></svg>
<div class="t" style="left:566px;top:119.7px;font-size:14.5px;color:#fff;font-weight:bold;letter-spacing:0.02px;text-shadow:1px 1px 1px #1c3a8c;">TightVNC: PC2</div>
<div class="a" style="left:1091px;top:117px;width:28px;height:20px;border:1px solid #2f52b0;border-top:none;border-radius:0 0 6px 6px;background:linear-gradient(#7fa2ee,#5a84e2 50%,#4c76d6)"></div>
<div class="a" style="left:1123px;top:117px;width:28px;height:20px;border:1px solid #2f52b0;border-top:none;border-radius:0 0 6px 6px;background:linear-gradient(#7fa2ee,#5a84e2 50%,#4c76d6)"></div>
<div class="a" style="left:1101px;top:127px;width:10px;height:4px;background:#e4ecfc;border-radius:1px;box-shadow:0 0 0 1px #4a74d4"></div>
<svg class="a" style="left:1130px;top:123px;" width="14" height="11" viewBox="0 0 14 11"><path d="M3.5 3.5 L10.5 8.5 M10.5 3.5 L3.5 8.5" stroke="#4a74d4" stroke-width="4.2" stroke-linecap="round"/><path d="M3.5 3.5 L10.5 8.5 M10.5 3.5 L3.5 8.5" stroke="#e8eefc" stroke-width="2.2" stroke-linecap="round"/></svg>
<div class="a" style="left:129px;top:140px;width:1024px;height:768px;background:#d4d0c8"></div>
<div class="a" style="left:129px;top:140px;width:1024px;height:18px;background:linear-gradient(90deg,#808080,#c0c0c0)"></div>
<svg class="a" style="left:131px;top:141px;" width="16" height="16" viewBox="0 0 16 16"><path d="M4.5 .5 H12 L15.5 4 V15.5 H4.5Z" fill="#fff" stroke="#000" stroke-width="1"/><path d="M12 .5 V4 H15.5" fill="none" stroke="#000" stroke-width=".8"/><rect x=".5" y="3.5" width="10" height="9" fill="#fff" stroke="#0a1a9a" stroke-width="1"/><text x="5.5" y="11" text-anchor="middle" font-family="Liberation Sans,sans-serif" font-weight="bold" font-size="8.5" fill="#0a1a9a">W</text></svg>
<div class="t" style="left:149px;top:143.7px;font-size:11px;font-family:'Liberation Sans','DejaVu Sans',sans-serif;color:#d4d0c8;font-weight:bold;letter-spacing:-0.01px;">TEXTO TARJETAS NECKERMAN.doc - Microsoft Word</div>
<div class="a" style="left:1101px;top:142px;width:16px;height:14px;background:#d4d0c8;border:1px solid;border-color:#fff #404040 #404040 #fff;box-shadow:inset -1px -1px 0 #808080,inset 1px 1px 0 #d4d0c8;"></div>
<div class="a" style="left:1117px;top:142px;width:16px;height:14px;background:#d4d0c8;border:1px solid;border-color:#fff #404040 #404040 #fff;box-shadow:inset -1px -1px 0 #808080,inset 1px 1px 0 #d4d0c8;"></div>
<div class="a" style="left:1135px;top:142px;width:16px;height:14px;background:#d4d0c8;border:1px solid;border-color:#fff #404040 #404040 #fff;box-shadow:inset -1px -1px 0 #808080,inset 1px 1px 0 #d4d0c8;"></div>
<div class="a" style="left:1105px;top:152px;width:6px;height:2px;background:#000"></div>
<svg class="a" style="left:1120px;top:144px;" width="10" height="10" viewBox="0 0 10 10"><path d="M3.5 .5 H9.5 V6.5 H7" fill="none" stroke="#000"/><path d="M3 1.2 H10" stroke="#000" stroke-width="1.4"/><rect x=".5" y="3.5" width="6" height="6" fill="none" stroke="#000"/><path d="M0 4.2 H7" stroke="#000" stroke-width="1.4"/></svg>
<svg class="a" style="left:1139px;top:145px;" width="9" height="8" viewBox="0 0 9 8"><path d="M.8 .5 L8.2 7.5 M8.2 .5 L.8 7.5" stroke="#000" stroke-width="1.6"/></svg>
<div class="a" style="left:132px;top:163px;width:3px;height:15px;background-image:linear-gradient(#a29e94 1px,transparent 1px);background-size:3px 2px"></div>
<div class="t" style="left:144px;top:165.7px;font-size:11px;font-family:'Liberation Sans','DejaVu Sans',sans-serif;color:#000;letter-spacing:-0.10px;"><u>A</u>rchivo</div>
<div class="t" style="left:196px;top:165.7px;font-size:11px;font-family:'Liberation Sans','DejaVu Sans',sans-serif;color:#000;letter-spacing:-0.44px;"><u>E</u>dición</div>
<div class="t" style="left:245px;top:165.7px;font-size:11px;font-family:'Liberation Sans','DejaVu Sans',sans-serif;color:#000;letter-spacing:-0.17px;"><u>V</u>er</div>
<div class="t" style="left:277px;top:165.7px;font-size:11px;font-family:'Liberation Sans','DejaVu Sans',sans-serif;color:#000;letter-spacing:0.21px;"><u>I</u>nsertar</div>
<div class="t" style="left:332px;top:165.7px;font-size:11px;font-family:'Liberation Sans','DejaVu Sans',sans-serif;color:#000;letter-spacing:-0.14px;"><u>F</u>ormato</div>
<div class="t" style="left:388px;top:165.7px;font-size:11px;font-family:'Liberation Sans','DejaVu Sans',sans-serif;color:#000;letter-spacing:-0.17px;"><u>H</u>erramientas</div>
<div class="t" style="left:467px;top:165.7px;font-size:11px;font-family:'Liberation Sans','DejaVu Sans',sans-serif;color:#000;letter-spacing:0.13px;">Tab<u>l</u>a</div>
<div class="t" style="left:510px;top:165.7px;font-size:11px;font-family:'Liberation Sans','DejaVu Sans',sans-serif;color:#000;letter-spacing:-0.06px;">Ve<u>n</u>tana</div>
<div class="t" style="left:566px;top:165.7px;font-size:11px;font-family:'Liberation Sans','DejaVu Sans',sans-serif;color:#000;letter-spacing:-0.12px;"><u>?</u></div>
<div class="a" style="left:986px;top:162px;width:148px;height:17px;background:#fff"></div>
<div class="t" style="left:988px;top:164.7px;font-size:11px;font-family:'Liberation Sans','DejaVu Sans',sans-serif;color:#808080;letter-spacing:-0.13px;">Escriba una pregunta</div>
<div class="a" style="left:1122px;top:163px;width:11px;height:15px;background:#d4d0c8"></div>
<svg class="a" style="left:1124px;top:169px;" width="5" height="3" viewBox="0 0 5 3"><path d="M0 0 H5 L2.5 3Z" fill="#000"/></svg>
<svg class="a" style="left:1139px;top:166px;" width="9" height="9" viewBox="0 0 9 9"><path d="M1 1 L8 8 M8 1 L1 8" stroke="#000" stroke-width="1.5"/></svg>
<div class="a" style="left:133px;top:183px;width:723px;height:26px;background:linear-gradient(#e4e1db,#d8d5cd 70%,#d2cec6);border-radius:0 4px 4px 0"></div>
<div class="a" style="left:133px;top:209px;width:630px;height:27px;background:linear-gradient(#e4e1db,#d8d5cd 70%,#d2cec6);border-radius:0 4px 4px 0"></div>
<div class="a" style="left:764px;top:209px;width:388px;height:27px;background:linear-gradient(#e4e1db,#d8d5cd 70%,#d2cec6)"></div>
<div class="a" style="left:132px;top:188px;width:3px;height:17px;background-image:linear-gradient(#a29e94 1px,transparent 1px);background-size:3px 2px"></div>
<div class="a" style="left:132px;top:214px;width:3px;height:17px;background-image:linear-gradient(#a29e94 1px,transparent 1px);background-size:3px 2px"></div>
<div class="a" style="left:766px;top:214px;width:3px;height:17px;background-image:linear-gradient(#a29e94 1px,transparent 1px);background-size:3px 2px"></div>
<svg class="a" style="left:140px;top:188px;" width="16" height="16" viewBox="0 0 16 16"><text x="0" y="11" font-family="Liberation Serif,serif" font-style="italic" font-weight="bold" font-size="12" fill="#3a3ac8">A</text><text x="6" y="13" font-family="Liberation Serif,serif" font-style="italic" font-weight="bold" font-size="13" fill="#2020a8">A</text><path d="M2 15 H15" stroke="#3a3ac8" stroke-width="1"/></svg>
<div class="a" style="left:161px;top:187px;width:92px;height:18px;background:#fff"></div>
<div class="t" style="left:163px;top:189.7px;font-size:11px;font-family:'Liberation Sans','DejaVu Sans',sans-serif;color:#000;letter-spacing:-0.03px;">Normal + Arial,</div>
<div class="a" style="left:241px;top:188px;width:11px;height:16px;background:#d4d0c8"></div>
<svg class="a" style="left:244px;top:195px;" width="5" height="3" viewBox="0 0 5 3"><path d="M0 0 H5 L2.5 3Z" fill="#000"/></svg>
<div class="a" style="left:255px;top:187px;width:112px;height:18px;background:#fff"></div>
<div class="t" style="left:258px;top:189.7px;font-size:11px;font-family:'Liberation Sans','DejaVu Sans',sans-serif;color:#000;letter-spacing:-0.20px;">Arial</div>
<div class="a" style="left:355px;top:188px;width:11px;height:16px;background:#d4d0c8"></div>
<svg class="a" style="left:358px;top:195px;" width="5" height="3" viewBox="0 0 5 3"><path d="M0 0 H5 L2.5 3Z" fill="#000"/></svg>
<div class="a" style="left:369px;top:187px;width:37px;height:18px;background:#fff"></div>
<div class="t" style="left:372px;top:189.7px;font-size:11px;font-family:'Liberation Sans','DejaVu Sans',sans-serif;color:#000;letter-spacing:-0.10px;">7,5</div>
<div class="a" style="left:394px;top:188px;width:11px;height:16px;background:#d4d0c8"></div>
<svg class="a" style="left:397px;top:195px;" width="5" height="3" viewBox="0 0 5 3"><path d="M0 0 H5 L2.5 3Z" fill="#000"/></svg>
<div class="a" style="left:409px;top:186px;width:2px;height:20px;border-left:1px solid #808080;border-right:1px solid #fff"></div>
<div class="t" style="left:418px;top:189.0px;font-size:13px;font-family:'Liberation Serif','DejaVu Serif',serif;color:#333;font-weight:bold;-webkit-text-stroke:.6px #333;">N</div>
<div class="t" style="left:441px;top:189.0px;font-size:13px;font-family:'Liberation Serif','DejaVu Serif',serif;color:#333;font-weight:bold;font-style:italic;">K</div>
<div class="t" style="left:464px;top:189.0px;font-size:13px;font-family:'Liberation Serif','DejaVu Serif',serif;color:#333;font-weight:bold;text-decoration:underline;">S</div>
<div class="a" style="left:484px;top:186px;width:2px;height:20px;border-left:1px solid #808080;border-right:1px solid #fff"></div>
<div class="a" style="left:488px;top:185px;width:23px;height:22px;background:#c1c8d9;border:1px solid #0a246a"></div>
<svg class="a" style="left:492px;top:190px;" width="16" height="15" viewBox="0 0 16 15"><rect x="0" y="0.0" width="15" height="1" fill="#000"/><rect x="0" y="2.0" width="10" height="1" fill="#000"/><rect x="0" y="4.0" width="15" height="1" fill="#000"/><rect x="0" y="6.0" width="10" height="1" fill="#000"/><rect x="0" y="8.0" width="15" height="1" fill="#000"/><rect x="0" y="10.0" width="10" height="1" fill="#000"/><rect x="0" y="12.0" width="15" height="1" fill="#000"/></svg>
<svg class="a" style="left:514px;top:190px;" width="16" height="15" viewBox="0 0 16 15"><rect x="0.5" y="0.0" width="15" height="1" fill="#333"/><rect x="3.5" y="2.0" width="9" height="1" fill="#333"/><rect x="0.5" y="4.0" width="15" height="1" fill="#333"/><rect x="3.5" y="6.0" width="9" height="1" fill="#333"/><rect x="0.5" y="8.0" width="15" height="1" fill="#333"/><rect x="3.5" y="10.0" width="9" height="1" fill="#333"/><rect x="0.5" y="12.0" width="15" height="1" fill="#333"/></svg>
<svg class="a" style="left:537px;top:190px;" width="16" height="15" viewBox="0 0 16 15"><rect x="1" y="0.0" width="15" height="1" fill="#333"/><rect x="6" y="2.0" width="10" height="1" fill="#333"/><rect x="1" y="4.0" width="15" height="1" fill="#333"/><rect x="6" y="6.0" width="10" height="1" fill="#333"/><rect x="1" y="8.0" width="15" height="1" fill="#333"/><rect x="6" y="10.0" width="10" height="1" fill="#333"/><rect x="1" y="12.0" width="15" height="1" fill="#333"/></svg>
<svg class="a" style="left:560px;top:190px;" width="16" height="15" viewBox="0 0 16 15"><rect x="0" y="0.0" width="15" height="1" fill="#333"/><rect x="0" y="2.0" width="15" height="1" fill="#333"/><rect x="0" y="4.0" width="15" height="1" fill="#333"/><rect x="0" y="6.0" width="15" height="1" fill="#333"/><rect x="0" y="8.0" width="15" height="1" fill="#333"/><rect x="0" y="10.0" width="15" height="1" fill="#333"/><rect x="0" y="12.0" width="15" height="1" fill="#333"/></svg>
<svg class="a" style="left:583px;top:188px;" width="17" height="17" viewBox="0 0 17 17"><path d="M3 1 V15 M0.5 4 L3 1 L5.5 4 M0.5 12 L3 15 L5.5 12" stroke="#3a3ac8" stroke-width="1.2" fill="none"/><path d="M8 3 H16 M8 8 H16 M8 13 H16" stroke="#333" stroke-width="1.2"/></svg>
<svg class="a" style="left:605px;top:195px;" width="5" height="3" viewBox="0 0 5 3"><path d="M0 0 H5 L2.5 3Z" fill="#000"/></svg>
<div class="a" style="left:616px;top:186px;width:2px;height:20px;border-left:1px solid #808080;border-right:1px solid #fff"></div>
<svg class="a" style="left:622px;top:188px;" width="16" height="17" viewBox="0 0 16 17"><text x="0" y="5.5" font-size="6" font-family="Liberation Sans" fill="#3a3ac8" font-weight="bold">1</text><text x="0" y="11" font-size="6" font-family="Liberation Sans" fill="#3a3ac8" font-weight="bold">2</text><text x="0" y="16.5" font-size="6" font-family="Liberation Sans" fill="#3a3ac8" font-weight="bold">3</text><path d="M6 3 H16 M6 8.5 H16 M6 14 H16" stroke="#333" stroke-width="1.1"/></svg>
<svg class="a" style="left:645px;top:188px;" width="16" height="17" viewBox="0 0 16 17"><rect x="0" y="1.5" width="3" height="3" fill="#3a3ac8"/><rect x="0" y="7" width="3" height="3" fill="#3a3ac8"/><rect x="0" y="12.5" width="3" height="3" fill="#3a3ac8"/><path d="M6 3 H16 M6 8.5 H16 M6 14 H16" stroke="#333" stroke-width="1.1"/></svg>
<svg class="a" style="left:668px;top:189px;" width="17" height="15" viewBox="0 0 17 15"><path d="M6 6.5 H0.5 M3 4 L0.5 6.5 L3 9" stroke="#3a3ac8" stroke-width="1.2" fill="none"/><path d="M5 1 H17 M8 4 H17 M8 6.5 H15 M8 9 H17 M5 12 H17" stroke="#333" stroke-width="1.1"/><path d="M8.5 0 V14" stroke="#808080" stroke-width=".7" stroke-dasharray="1 1"/></svg>
<svg class="a" style="left:691px;top:189px;" width="17" height="15" viewBox="0 0 17 15"><path d="M0 6.5 H5.5 M3 4 L5.5 6.5 L3 9" stroke="#3a3ac8" stroke-width="1.2" fill="none"/><path d="M5 1 H17 M8 4 H17 M8 6.5 H15 M8 9 H17 M5 12 H17" stroke="#333" stroke-width="1.1"/><path d="M8.5 0 V14" stroke="#808080" stroke-width=".7" stroke-dasharray="1 1"/></svg>
<div class="a" style="left:714px;top:186px;width:2px;height:20px;border-left:1px solid #808080;border-right:1px solid #fff"></div>
<svg class="a" style="left:723px;top:190px;" width="14" height="14" viewBox="0 0 14 14"><rect x=".5" y=".5" width="13" height="13" fill="none" stroke="#333"/><path d="M7 2 V12 M2 7 H12" stroke="#999" stroke-width="1" stroke-dasharray="1 1"/></svg>
<svg class="a" style="left:743px;top:195px;" width="5" height="3" viewBox="0 0 5 3"><path d="M0 0 H5 L2.5 3Z" fill="#000"/></svg>
<svg class="a" style="left:756px;top:187px;" width="17" height="18" viewBox="0 0 17 18"><path d="M3 11 L11 2 L14 4.5 L6 13Z" fill="#fff" stroke="#3a3ac8" stroke-width="1"/><path d="M3 11 L6 13 L2 14Z" fill="#3a3ac8"/><rect x="0" y="14.5" width="16" height="3.5" fill="#fff"/></svg>
<svg class="a" style="left:777px;top:195px;" width="5" height="3" viewBox="0 0 5 3"><path d="M0 0 H5 L2.5 3Z" fill="#000"/></svg>
<svg class="a" style="left:789px;top:185px;" width="17" height="20" viewBox="0 0 17 20"><text x="8.5" y="13" text-anchor="middle" font-family="Liberation Serif,serif" font-size="16" font-weight="bold" fill="#3a3ac8">A</text><rect x="0" y="15.5" width="16" height="4" fill="#f00000"/></svg>
<svg class="a" style="left:811px;top:195px;" width="5" height="3" viewBox="0 0 5 3"><path d="M0 0 H5 L2.5 3Z" fill="#000"/></svg>
<svg class="a" style="left:825px;top:188px;" width="14" height="14" viewBox="0 0 14 14"><path d="M1 6 L6 12 M6 6 L1 12" stroke="#444" stroke-width="1.6"/><text x="8" y="6" font-size="6" font-family="Liberation Sans" fill="#c03030" font-weight="bold">2</text></svg>
<svg class="a" style="left:846px;top:201px;" width="5" height="3" viewBox="0 0 5 3"><path d="M0 0 H5 L2.5 3Z" fill="#000"/></svg>
<svg class="a" style="left:141px;top:213px;" width="13" height="16" viewBox="0 0 13 16"><path d="M.5 .5 H8.5 L12.5 4.5 V15.5 H.5Z" fill="#fff" stroke="#000"/><path d="M8.5 .5 V4.5 H12.5" fill="none" stroke="#000" stroke-width=".8"/></svg>
<svg class="a" style="left:162px;top:213px;" width="17" height="16" viewBox="0 0 17 16"><path d="M.5 14.5 V4.5 H5 L6.5 6 H12.5 V8" fill="#f0e48c" stroke="#000" stroke-width=".9"/><path d="M.5 14.5 L3.5 8 H16 L13 14.5Z" fill="#b8a83c" stroke="#000" stroke-width=".9"/><path d="M10 3 Q13 0 15 3 M15 3 l0 -2.4 M15 3 l-2.4 0" stroke="#000" stroke-width=".9" fill="none"/></svg>
<svg class="a" style="left:187px;top:213px;" width="15" height="16" viewBox="0 0 15 16"><rect x=".5" y=".5" width="14" height="14.5" fill="#8a8a28" stroke="#000"/><rect x="3" y="1" width="9" height="6" fill="#fff"/><rect x="3.5" y="9.5" width="8" height="5.5" fill="#333"/><rect x="5" y="10.5" width="2" height="3.5" fill="#d4d0c8"/></svg>
<svg class="a" style="left:208px;top:213px;" width="18" height="17" viewBox="0 0 18 17"><path d="M3 .5 H10 L13 3.5 V13.5 H3Z" fill="#fff" stroke="#555" stroke-width=".9"/><rect x="1" y="5" width="4" height="4" fill="#d03030"/><rect x="5" y="8" width="4" height="4" fill="#3a3ac8"/><circle cx="12" cy="11.5" r="4" fill="#7fd8e8" stroke="#207080" stroke-width="1"/><path d="M14.5 14.5 L17 17" stroke="#c03030" stroke-width="1.6"/></svg>
<div class="a" style="left:231px;top:212px;width:2px;height:20px;border-left:1px solid #808080;border-right:1px solid #fff"></div>
<svg class="a" style="left:237px;top:213px;" width="18" height="17" viewBox="0 0 18 17"><path d="M5 .8 H13 L14 6 H4Z" fill="#fff" stroke="#000" stroke-width=".9"/><path d="M1 7 L4 5.5 H14 L17 7 V12.5 H1Z" fill="#c8c8c8" stroke="#000" stroke-width=".9"/><path d="M1 12.5 L3 15.5 H15 L17 12.5" fill="#888" stroke="#000" stroke-width=".9"/><path d="M4 9 H14" stroke="#555" stroke-width="1"/><rect x="13" y="10" width="2" height="1.3" fill="#e8e020"/></svg>
<svg class="a" style="left:260px;top:213px;" width="18" height="17" viewBox="0 0 18 17"><path d="M1.5 .5 H9.5 L12.5 3.5 V15.5 H1.5Z" fill="#fff" stroke="#000" stroke-width=".9"/><circle cx="10" cy="10" r="3.6" fill="#bfe6f0" stroke="#000" stroke-width="1"/><path d="M12.6 12.6 L16 16" stroke="#000" stroke-width="1.8"/></svg>
<svg class="a" style="left:283px;top:212px;" width="18" height="18" viewBox="0 0 18 18"><text x="1" y="6.5" font-size="6.5" font-family="Liberation Sans" fill="#222" font-weight="bold" letter-spacing=".2">ABC</text><path d="M3 11 L7 16 L16 4" stroke="#3a3ac8" stroke-width="1.8" fill="none"/></svg>
<div class="a" style="left:306px;top:212px;width:2px;height:20px;border-left:1px solid #808080;border-right:1px solid #fff"></div>
<svg class="a" style="left:314px;top:213px;" width="13" height="17" viewBox="0 0 13 17"><path d="M4 .5 L8 10 M9 .5 L5 10" stroke="#808080" stroke-width="1.1"/><circle cx="3.5" cy="13" r="2.6" fill="none" stroke="#808080" stroke-width="1.1"/><circle cx="9.5" cy="13" r="2.6" fill="none" stroke="#808080" stroke-width="1.1"/></svg>
<svg class="a" style="left:335px;top:214px;" width="16" height="16" viewBox="0 0 16 16"><path d="M.5 .5 H6 L8.5 3 V10.5 H.5Z" fill="#e8e6e0" stroke="#808080" stroke-width=".9"/><path d="M6.5 4.5 H12 L14.5 7 V15 H6.5Z" fill="#e8e6e0" stroke="#808080" stroke-width=".9"/><path d="M8 9 h5 M8 11 h5 M8 13 h5" stroke="#909090" stroke-width=".8"/></svg>
<svg class="a" style="left:357px;top:212px;" width="19" height="18" viewBox="0 0 19 18"><rect x="1" y="3" width="14" height="14" fill="#a09838" stroke="#000" stroke-width=".9"/><rect x="4.5" y=".8" width="7" height="4" fill="#c8c8c8" stroke="#000" stroke-width=".8"/><path d="M8.5 8.5 H15 L17.5 11 V17.5 H8.5Z" fill="#fff" stroke="#2030a8" stroke-width=".9"/><path d="M10 12 h6 M10 14 h6 M10 16 h6" stroke="#2030a8" stroke-width=".7"/></svg>
<svg class="a" style="left:381px;top:212px;" width="18" height="18" viewBox="0 0 18 18"><path d="M11 6 L16 1 L17.5 2.5 L12.5 7.5Z" fill="#404080" stroke="#000" stroke-width=".7"/><path d="M5 8 L9 4 L14 9 L10 13Z" fill="#f0e070" stroke="#000" stroke-width=".8"/><path d="M4 9 L9 14 L6 17 L1 12Z" fill="#fff" stroke="#000" stroke-width=".8"/><path d="M3 11 l4 4 M4.5 9.8 l4 4" stroke="#888" stroke-width=".6"/></svg>
<div class="a" style="left:404px;top:212px;width:2px;height:20px;border-left:1px solid #808080;border-right:1px solid #fff"></div>
<svg class="a" style="left:412px;top:216px;" width="14" height="11" viewBox="0 0 14 11"><path d="M3 6.5 Q6 1 10 3 Q14 6 9 10" fill="none" stroke="#808080" stroke-width="1.3"/><path d="M.5 3 L1.5 8.5 L6.5 6.5Z" fill="#808080"/></svg>
<svg class="a" style="left:432px;top:221px;" width="5" height="3" viewBox="0 0 5 3"><path d="M0 0 H5 L2.5 3Z" fill="#808080"/></svg>
<svg class="a" style="left:446px;top:216px;" width="14" height="11" viewBox="0 0 14 11"><path d="M11 6.5 Q8 1 4 3 Q0 6 5 10" fill="none" stroke="#808080" stroke-width="1.3"/><path d="M13.5 3 L12.5 8.5 L7.5 6.5Z" fill="#808080"/></svg>
<svg class="a" style="left:466px;top:221px;" width="5" height="3" viewBox="0 0 5 3"><path d="M0 0 H5 L2.5 3Z" fill="#808080"/></svg>
<div class="a" style="left:478px;top:212px;width:2px;height:20px;border-left:1px solid #808080;border-right:1px solid #fff"></div>
<svg class="a" style="left:485px;top:212px;" width="18" height="19" viewBox="0 0 18 19"><defs><radialGradient id="g55" cx=".4" cy=".35" r=".7"><stop offset="0" stop-color="#7fd0ff"/><stop offset="1" stop-color="#1848b0"/></radialGradient></defs><circle cx="8" cy="7.5" r="7" fill="url(#g55)" stroke="#103080" stroke-width=".7"/><path d="M4 4 Q7 2 9 5 Q11 8 7 9 Q3 9 4 4Z M10 9 Q13 8 12.5 11 Q11 13 10 9Z" fill="#40b040"/><rect x="4" y="12.5" width="6" height="4.5" rx="2" fill="none" stroke="#222" stroke-width="1.3"/><rect x="9" y="12.5" width="6" height="4.5" rx="2" fill="none" stroke="#222" stroke-width="1.3"/></svg>
<svg class="a" style="left:508px;top:213px;" width="17" height="17" viewBox="0 0 17 17"><rect x=".5" y="1.5" width="13" height="14" fill="#fff" stroke="#222" stroke-width="1"/><path d="M7 1.5 V15.5 M.5 8.5 H13.5" stroke="#222" stroke-width="1"/><path d="M9 11 L14.5 3 L16.5 4.5 L11 12.5Z" fill="#f0d040" stroke="#803020" stroke-width=".8"/></svg>
<svg class="a" style="left:531px;top:214px;" width="17" height="15" viewBox="0 0 17 15"><rect x=".5" y=".5" width="16" height="14" fill="#fff" stroke="#222" stroke-width="1"/><rect x="1" y="1" width="15" height="3" fill="#3a3ac8"/><path d="M.5 7.5 H16.5 M.5 11 H16.5 M4.5 4 V14.5 M8.5 4 V14.5 M12.5 4 V14.5" stroke="#777" stroke-width=".8"/></svg>
<svg class="a" style="left:554px;top:214px;" width="17" height="16" viewBox="0 0 17 16"><rect x=".5" y=".5" width="16" height="13" fill="#fff" stroke="#222" stroke-width="1"/><rect x="1" y="1" width="15" height="2.5" fill="#808080"/><path d="M.5 7 H16.5 M.5 10.5 H16.5 M5.5 3.5 V13.5 M11 3.5 V13.5" stroke="#999" stroke-width=".7"/><path d="M5 6 L13 15.5 M13 6 L5 15.5" stroke="#2a8a3a" stroke-width="2.6"/></svg>
<svg class="a" style="left:578px;top:214px;" width="14" height="14" viewBox="0 0 14 14"><path d="M0 1 H6 M8 1 H14 M0 3.5 H6 M8 3.5 H14 M0 6 H6 M8 6 H14 M0 8.5 H6 M8 8.5 H14 M0 11 H6 M8 11 H14 M0 13.5 H6 M8 13.5 H14" stroke="#333" stroke-width="1.2"/></svg>
<div class="a" style="left:597px;top:211px;width:24px;height:23px;background:#c1c8d9;border:1px solid #0a246a"></div>
<svg class="a" style="left:600px;top:213px;" width="19" height="19" viewBox="0 0 19 19"><text x="0" y="15" font-family="Liberation Serif,serif" font-style="italic" font-weight="bold" font-size="15" fill="#2030b0">A</text><rect x="8" y="2" width="7" height="8" fill="#e8d838" stroke="#333" stroke-width=".8"/><ellipse cx="12.5" cy="13.5" rx="4.5" ry="3.8" fill="#38c8d8" stroke="#205080" stroke-width=".8"/></svg>
<div class="a" style="left:623px;top:212px;width:2px;height:20px;border-left:1px solid #808080;border-right:1px solid #fff"></div>
<svg class="a" style="left:629px;top:213px;" width="17" height="18" viewBox="0 0 17 18"><rect x=".5" y=".5" width="15" height="14" fill="#fff" stroke="#222" stroke-width="1"/><rect x="1" y="1" width="14" height="2.2" fill="#3a3ac8"/><circle cx="7" cy="9" r="3.8" fill="#bfe6f0" stroke="#222" stroke-width="1"/><path d="M9.8 11.8 L14 16.5" stroke="#c03030" stroke-width="2"/></svg>
<div class="t" style="left:653px;top:212.6px;font-size:17px;font-family:'Liberation Sans','DejaVu Sans',sans-serif;color:#333;">¶</div>
<svg class="a" style="left:733px;top:213px;" width="17" height="18" viewBox="0 0 17 18"><path d="M1 1 H15 V13 H8 L5 16.5 V13 H1Z" fill="#ffffc8" stroke="#333" stroke-width="1"/><text x="8" y="11.5" text-anchor="middle" font-family="Liberation Sans" font-weight="bold" font-size="11" fill="#2030b0">?</text></svg>
<svg class="a" style="left:754px;top:227px;" width="5" height="3" viewBox="0 0 5 3"><path d="M0 0 H5 L2.5 3Z" fill="#000"/></svg>
<svg class="a" style="left:996px;top:212px;" width="17" height="17" viewBox="0 0 17 17"><path d="M5.5 2.5 H12 L15.5 6 L13 14.5 H5.5Z" fill="#ffff9c" stroke="#333" stroke-width=".9"/><path d="M11.5 14 L15 5.5" stroke="#c8b428" stroke-width="1.4"/><rect x="14" y="4" width="2.2" height="2.2" fill="#c03030"/><path d="M0 8.5 L5 4 V6.5 H9 V10.5 H5 V13Z" fill="#3a3ac8" stroke="#202080" stroke-width=".5"/></svg>
<svg class="a" style="left:1018px;top:212px;" width="17" height="17" viewBox="0 0 17 17"><path d="M5.5 2.5 H12 L15.5 6 L13 14.5 H5.5Z" fill="#ffff9c" stroke="#333" stroke-width=".9"/><path d="M11.5 14 L15 5.5" stroke="#c8b428" stroke-width="1.4"/><rect x="14" y="4" width="2.2" height="2.2" fill="#c03030"/><path d="M10 8.5 L5 4 V6.5 H1 V10.5 H5 V13Z" fill="#3a3ac8" stroke="#202080" stroke-width=".5"/></svg>
<svg class="a" style="left:1040px;top:212px;" width="17" height="17" viewBox="0 0 17 17"><path d="M5.5 2.5 H12 L15.5 6 L13 14.5 H5.5Z" fill="#ffff9c" stroke="#333" stroke-width=".9"/><path d="M11.5 14 L15 5.5" stroke="#c8b428" stroke-width="1.4"/><rect x="14" y="4" width="2.2" height="2.2" fill="#c03030"/><path d="M1.5 8.5 L4.5 12 L10 4.5" stroke="#3a3ac8" stroke-width="2" fill="none"/></svg>
<svg class="a" style="left:1063px;top:221px;" width="5" height="3" viewBox="0 0 5 3"><path d="M0 0 H5 L2.5 3Z" fill="#000"/></svg>
<svg class="a" style="left:1075px;top:212px;" width="17" height="17" viewBox="0 0 17 17"><path d="M5.5 2.5 H12 L15.5 6 L13 14.5 H5.5Z" fill="#ffff9c" stroke="#333" stroke-width=".9"/><path d="M11.5 14 L15 5.5" stroke="#c8b428" stroke-width="1.4"/><rect x="14" y="4" width="2.2" height="2.2" fill="#c03030"/><path d="M1 4 L9 13 M9 4 L1 13" stroke="#c03030" stroke-width="1.6"/></svg>
<svg class="a" style="left:1097px;top:221px;" width="5" height="3" viewBox="0 0 5 3"><path d="M0 0 H5 L2.5 3Z" fill="#000"/></svg>
<svg class="a" style="left:1141px;top:214px;" width="9" height="6" viewBox="0 0 9 6"><path d="M1 .5 L3.5 3 L1 5.5 M5 .5 L7.5 3 L5 5.5" stroke="#000" stroke-width="1.1" fill="none"/></svg>
<svg class="a" style="left:1143px;top:226px;" width="5" height="3" viewBox="0 0 5 3"><path d="M0 0 H5 L2.5 3Z" fill="#000"/></svg>
<div class="a" style="left:672px;top:213px;width:55px;height:18px;background:#fff"></div>
<div class="t" style="left:675px;top:215.7px;font-size:11px;font-family:'Liberation Sans','DejaVu Sans',sans-serif;color:#000;letter-spacing:-0.04px;">100%</div>
<div class="a" style="left:715px;top:214px;width:11px;height:16px;background:#d4d0c8"></div>
<svg class="a" style="left:718px;top:221px;" width="5" height="3" viewBox="0 0 5 3"><path d="M0 0 H5 L2.5 3Z" fill="#000"/></svg>
<div class="a" style="left:773px;top:213px;width:160px;height:18px;background:#fff"></div>
<div class="t" style="left:775px;top:216.7px;font-size:11px;font-family:'Liberation Sans','DejaVu Sans',sans-serif;color:#000;letter-spacing:-0.22px;">Marcas mostradas finales</div>
<div class="a" style="left:921px;top:214px;width:11px;height:16px;background:#d4d0c8"></div>
<svg class="a" style="left:924px;top:221px;" width="5" height="3" viewBox="0 0 5 3"><path d="M0 0 H5 L2.5 3Z" fill="#000"/></svg>
<div class="t" style="left:937px;top:216.7px;font-size:11px;font-family:'Liberation Sans','DejaVu Sans',sans-serif;color:#000;letter-spacing:-0.33px;"><u>M</u>ostrar</div>
<svg class="a" style="left:977px;top:220px;" width="5" height="3" viewBox="0 0 5 3"><path d="M0 0 H5 L2.5 3Z" fill="#000"/></svg>
<div class="a" style="left:988px;top:212px;width:2px;height:20px;border-left:1px solid #808080;border-right:1px solid #fff"></div>
<div class="a" style="left:131px;top:236px;width:1022px;height:1px;background:#808080"></div>
<div class="a" style="left:131px;top:237px;width:1022px;height:1px;background:#404040"></div>
<div class="a" style="left:134px;top:240px;width:1001px;height:575px;background:#808080;border-top:1px solid #404040;border-left:1px solid #404040"></div>
<div class="a" style="left:237px;top:257px;width:797px;height:558px;background:#fff;border-top:1px solid #000;border-left:1px solid #000;border-right:2px solid #000"></div>
<div class="t" style="left:467px;top:364.3px;font-size:10px;font-family:'Liberation Sans','DejaVu Sans',sans-serif;color:#000;letter-spacing:0.02px;white-space:pre;">N payphone)  to a landline  60 Minutes</div>
<div class="t" style="left:467px;top:375.8px;font-size:10px;font-family:'Liberation Sans','DejaVu Sans',sans-serif;color:#000;letter-spacing:0.01px;white-space:pre;">N payphone) to a Mobile     36 Minutes</div>
<div class="t" style="left:466px;top:399.3px;font-size:10px;font-family:'Liberation Sans','DejaVu Sans',sans-serif;color:#000;white-space:pre;">Blue payphone) to landline 20 Minutes</div>
<div class="t" style="left:466px;top:410.3px;font-size:10px;font-family:'Liberation Sans','DejaVu Sans',sans-serif;color:#000;letter-spacing:-0.02px;white-space:pre;">Blue payphone) to Mobile   15 Minutes</div>
<div class="t" style="left:467px;top:444.8px;font-size:10px;font-family:'Liberation Sans','DejaVu Sans',sans-serif;color:#000;letter-spacing:0.02px;white-space:pre;">N payphone)  to a landline  60 Minutes</div>
<div class="t" style="left:467px;top:455.8px;font-size:10px;font-family:'Liberation Sans','DejaVu Sans',sans-serif;color:#000;letter-spacing:0.01px;white-space:pre;">N payphone) to a Mobile     36 Minutes</div>
<div class="t" style="left:466px;top:479.3px;font-size:10px;font-family:'Liberation Sans','DejaVu Sans',sans-serif;color:#000;white-space:pre;">Blue payphone) to landline 20 Minutes</div>
<div class="t" style="left:466px;top:490.8px;font-size:10px;font-family:'Liberation Sans','DejaVu Sans',sans-serif;color:#000;letter-spacing:-0.02px;white-space:pre;">Blue payphone) to Mobile   15 Minutes</div>
<div class="a" style="left:1135px;top:238px;width:16px;height:577px;background-color:#eae8e3;background-image:conic-gradient(#fff 25%,#d4d0c8 0 50%,#fff 0 75%,#d4d0c8 0);background-size:2px 2px;"></div>
<div class="a" style="left:1135px;top:238px;width:16px;height:4px;background:#d4d0c8;border:1px solid;border-color:#d4d0c8 #404040 #404040 #d4d0c8;box-shadow:inset -1px -1px 0 #808080,inset 1px 1px 0 #fff;"></div>
<div class="a" style="left:1135px;top:243px;width:16px;height:16px;background:#d4d0c8;border:1px solid;border-color:#d4d0c8 #404040 #404040 #d4d0c8;box-shadow:inset -1px -1px 0 #808080,inset 1px 1px 0 #fff;"></div>
<svg class="a" style="left:1139px;top:248px;" width="7" height="4" viewBox="0 0 7 4"><path d="M3.5 0 L7 4 H0Z" fill="#000"/></svg>
<div class="a" style="left:1135px;top:259px;width:16px;height:244px;background:#d4d0c8;border:1px solid;border-color:#d4d0c8 #404040 #404040 #d4d0c8;box-shadow:inset -1px -1px 0 #808080,inset 1px 1px 0 #fff;"></div>
<div class="a" style="left:1135px;top:751px;width:16px;height:16px;background:#d4d0c8;border:1px solid;border-color:#d4d0c8 #404040 #404040 #d4d0c8;box-shadow:inset -1px -1px 0 #808080,inset 1px 1px 0 #fff;"></div>
<svg class="a" style="left:1139px;top:757px;" width="7" height="4" viewBox="0 0 7 4"><path d="M0 0 H7 L3.5 4Z" fill="#000"/></svg>
<div class="a" style="left:1135px;top:767px;width:16px;height:48px;background:#d4d0c8"></div>
<svg class="a" style="left:1139px;top:771px;" width="8" height="8" viewBox="0 0 8 8"><path d="M4 0 L7.5 3.5 H.5Z M4 3.5 L7.5 7 H.5Z" fill="#000"/></svg>
<svg class="a" style="left:1139px;top:786px;" width="8" height="8" viewBox="0 0 8 8"><circle cx="4" cy="4" r="3" fill="#c8c8c8" stroke="#000" stroke-width=".9"/></svg>
<svg class="a" style="left:1139px;top:801px;" width="8" height="8" viewBox="0 0 8 8"><path d="M.5 .5 H7.5 L4 4Z M.5 4 H7.5 L4 7.5Z" fill="#000"/></svg>
<div class="a" style="left:131px;top:815px;width:1020px;height:16px;background:#d4d0c8"></div>
<svg class="a" style="left:135px;top:819px;" width="11" height="9" viewBox="0 0 11 9"><path d="M0 .5 H10 M0 3 H10 M0 5.5 H10 M0 8 H10" stroke="#000" stroke-width="1"/></svg>
<svg class="a" style="left:150px;top:818px;" width="12" height="11" viewBox="0 0 12 11"><rect x=".5" y=".5" width="8" height="7" fill="#fff" stroke="#000"/><circle cx="8" cy="7.5" r="2.6" fill="#3a8ad8" stroke="#000" stroke-width=".7"/></svg>
<div class="a" style="left:163px;top:815px;width:16px;height:16px;background:#d4d5d8;border:1px solid #0a246a"></div>
<svg class="a" style="left:166px;top:818px;" width="10" height="10" viewBox="0 0 10 10"><rect x=".5" y=".5" width="9" height="9" fill="#fff" stroke="#000"/><path d="M2.5 3.5 H7.5 M2.5 6 H7.5" stroke="#000" stroke-width="1"/></svg>
<svg class="a" style="left:181px;top:819px;" width="12" height="9" viewBox="0 0 12 9"><path d="M0 .5 H10 M3 3 H11 M5 5.5 H11 M3 8 H11" stroke="#000" stroke-width="1" stroke-dasharray="3 1"/></svg>
<div class="a" style="left:196px;top:815px;width:15px;height:16px;background:#d4d0c8;border:1px solid;border-color:#d4d0c8 #404040 #404040 #d4d0c8;box-shadow:inset -1px -1px 0 #808080,inset 1px 1px 0 #fff;"></div>
<svg class="a" style="left:201px;top:819px;" width="4" height="7" viewBox="0 0 4 7"><path d="M4 0 V7 L0 3.5Z" fill="#000"/></svg>
<div class="a" style="left:211px;top:815px;width:907px;height:16px;background:#d4d0c8;border:1px solid;border-color:#d4d0c8 #404040 #404040 #d4d0c8;box-shadow:inset -1px -1px 0 #808080,inset 1px 1px 0 #fff;"></div>
<div class="a" style="left:1119px;top:815px;width:16px;height:16px;background:#d4d0c8;border:1px solid;border-color:#d4d0c8 #404040 #404040 #d4d0c8;box-shadow:inset -1px -1px 0 #808080,inset 1px 1px 0 #fff;"></div>
<svg class="a" style="left:1125px;top:819px;" width="4" height="7" viewBox="0 0 4 7"><path d="M0 0 V7 L4 3.5Z" fill="#000"/></svg>
<div class="a" style="left:131px;top:832px;width:1022px;height:1px;background:#fff"></div>
<div class="a" style="left:158px;top:835px;width:600px;height:25px;background:linear-gradient(#e4e1db,#d8d5cd 70%,#d2cec6);border-radius:0 4px 4px 0"></div>
<div class="a" style="left:160px;top:839px;width:3px;height:18px;background-image:linear-gradient(#a29e94 1px,transparent 1px);background-size:3px 2px"></div>
<div class="t" style="left:167px;top:840.7px;font-size:11px;font-family:'Liberation Sans','DejaVu Sans',sans-serif;color:#000;letter-spacing:-0.37px;">Di<u>b</u>ujo</div>
<svg class="a" style="left:199px;top:845px;" width="5" height="3" viewBox="0 0 5 3"><path d="M0 0 H5 L2.5 3Z" fill="#000"/></svg>
<div class="a" style="left:236px;top:837px;width:2px;height:20px;border-left:1px solid #808080;border-right:1px solid #fff"></div>
<div class="t" style="left:242px;top:840.7px;font-size:11px;font-family:'Liberation Sans','DejaVu Sans',sans-serif;color:#000;letter-spacing:-0.03px;">A<u>u</u>toformas</div>
<svg class="a" style="left:301px;top:845px;" width="5" height="3" viewBox="0 0 5 3"><path d="M0 0 H5 L2.5 3Z" fill="#000"/></svg>
<svg class="a" style="left:217px;top:838px;" width="12" height="18" viewBox="0 0 12 18"><path d="M.7 .7 V14 L4 11 L6.3 16.3 L8.3 15.4 L6 10.3 H10.5Z" fill="#fff" stroke="#000" stroke-width="1"/></svg>
<svg class="a" style="left:317px;top:840px;" width="14" height="13" viewBox="0 0 14 13"><path d="M.5 .5 L13 12.5" stroke="#333" stroke-width="1"/></svg>
<svg class="a" style="left:341px;top:840px;" width="13" height="13" viewBox="0 0 13 13"><path d="M.5 .5 L9 9" stroke="#333" stroke-width="1"/><path d="M12 12 L5.5 9.5 L9.5 5.5Z" fill="#333"/></svg>
<svg class="a" style="left:361px;top:839px;" width="17" height="14" viewBox="0 0 17 14"><rect x=".5" y=".5" width="15" height="12" fill="none" stroke="#333"/></svg>
<svg class="a" style="left:384px;top:840px;" width="17" height="12" viewBox="0 0 17 12"><ellipse cx="8" cy="5.5" rx="7.5" ry="5" fill="none" stroke="#333"/></svg>
<svg class="a" style="left:407px;top:838px;" width="16" height="16" viewBox="0 0 16 16"><rect x=".5" y=".5" width="14" height="14" fill="#fff" stroke="#333"/><text x="3" y="7" font-size="6.5" font-weight="bold" font-family="Liberation Sans" fill="#000">A</text><path d="M8 3 h5 M8 5.5 h5 M2.5 8.5 h10 M2.5 11 h10 M2.5 13 h10" stroke="#333" stroke-width=".8"/></svg>
<svg class="a" style="left:429px;top:837px;" width="18" height="19" viewBox="0 0 18 19"><text x="0" y="16" font-family="Liberation Serif,serif" font-style="italic" font-weight="bold" font-size="19" fill="#3a50d0">A</text><path d="M15 2 V17" stroke="#5a6ad8" stroke-width="1.4"/></svg>
<svg class="a" style="left:453px;top:838px;" width="16" height="16" viewBox="0 0 16 16"><circle cx="8" cy="8" r="5.5" fill="none" stroke="#3a3ac8" stroke-width=".8" stroke-dasharray="2 1.5"/><circle cx="13.5" cy="8.0" r="1.5" fill="#d03030"/><circle cx="10.8" cy="12.8" r="1.5" fill="#3a3ac8"/><circle cx="5.3" cy="12.8" r="1.5" fill="#d0a020"/><circle cx="2.5" cy="8.0" r="1.5" fill="#30a030"/><circle cx="5.2" cy="3.2" r="1.5" fill="#3a3ac8"/><circle cx="10.8" cy="3.2" r="1.5" fill="#a030a0"/></svg>
<svg class="a" style="left:476px;top:838px;" width="16" height="16" viewBox="0 0 16 16"><rect x=".5" y=".5" width="15" height="15" fill="#fff" stroke="#555" stroke-dasharray="1 1"/><circle cx="8" cy="5.5" r="2.6" fill="#e8b090"/><path d="M5 3.5 Q8 0 11 3.5" stroke="#a03030" stroke-width="1.6" fill="none"/><path d="M4 14 Q4 8 8 8.5 Q12 8 12 14Z" fill="#9050b0"/></svg>
<svg class="a" style="left:500px;top:838px;" width="16" height="16" viewBox="0 0 16 16"><rect x=".5" y=".5" width="15" height="14" fill="#f8f0a0" stroke="#333"/><circle cx="11" cy="4.5" r="1.8" fill="#fff" stroke="#666" stroke-width=".6"/><path d="M1 14 L6 7 L9.5 11 L11.5 9 L15 14Z" fill="#777" stroke="#333" stroke-width=".6"/></svg>
<div class="a" style="left:521px;top:837px;width:2px;height:20px;border-left:1px solid #808080;border-right:1px solid #fff"></div>
<svg class="a" style="left:528px;top:837px;" width="17" height="19" viewBox="0 0 17 19"><path d="M4 7 L9 2 L14 7 L9 12Z" fill="#fff" stroke="#333" stroke-width="1"/><path d="M8.5 1 Q6 0 6.5 4" fill="none" stroke="#333" stroke-width=".9"/><path d="M14 7 Q16 10 15 12 Q13.5 10.5 14 7Z" fill="#3a3ac8"/><rect x="0" y="14.5" width="16" height="4" fill="#ffff40"/></svg>
<svg class="a" style="left:549px;top:846px;" width="5" height="3" viewBox="0 0 5 3"><path d="M0 0 H5 L2.5 3Z" fill="#000"/></svg>
<svg class="a" style="left:562px;top:837px;" width="17" height="19" viewBox="0 0 17 19"><path d="M3 12 Q8 10 13 2 L15 3.5 Q10 11 5 13.5Z" fill="#3a3ac8" stroke="#202080" stroke-width=".6"/><path d="M12 3 L15 1 L15.5 4Z" fill="#e0c030"/><rect x="0" y="14.5" width="16" height="4" fill="#4060f0"/></svg>
<svg class="a" style="left:583px;top:846px;" width="5" height="3" viewBox="0 0 5 3"><path d="M0 0 H5 L2.5 3Z" fill="#000"/></svg>
<svg class="a" style="left:596px;top:836px;" width="17" height="20" viewBox="0 0 17 20"><text x="8.5" y="13.5" text-anchor="middle" font-family="Liberation Serif,serif" font-size="16" fill="#3a3ac8">A</text><rect x="0" y="15.5" width="16" height="4" fill="#f00000"/></svg>
<svg class="a" style="left:617px;top:846px;" width="5" height="3" viewBox="0 0 5 3"><path d="M0 0 H5 L2.5 3Z" fill="#000"/></svg>
<svg class="a" style="left:630px;top:840px;" width="16" height="12" viewBox="0 0 16 12"><path d="M0 1 H15 M0 5.5 H15 M0 10 H15" stroke="#222" stroke-width="2"/></svg>
<svg class="a" style="left:652px;top:840px;" width="16" height="12" viewBox="0 0 16 12"><path d="M0 1 H15" stroke="#444" stroke-width="1" stroke-dasharray="1 1"/><path d="M0 4.5 H15" stroke="#444" stroke-width="1" stroke-dasharray="2 1"/><path d="M0 8 H15" stroke="#444" stroke-width="1" stroke-dasharray="3 1"/><path d="M0 11 H15" stroke="#444" stroke-width="1" stroke-dasharray="1 2"/></svg>
<svg class="a" style="left:676px;top:839px;" width="17" height="14" viewBox="0 0 17 14"><path d="M1 3.5 H15 M12 .5 L15.5 3.5 L12 6.5 M16 10.5 H1.5 M4.5 7.5 L1 10.5 L4.5 13.5" stroke="#333" stroke-width="1.2" fill="none"/></svg>
<svg class="a" style="left:700px;top:838px;" width="16" height="16" viewBox="0 0 16 16"><rect x="3" y="3" width="11" height="11" fill="#555"/><rect x=".5" y=".5" width="11" height="11" fill="#38a8a8" stroke="#205858"/></svg>
<svg class="a" style="left:722px;top:837px;" width="18" height="18" viewBox="0 0 18 18"><path d="M1 6 L6 1 H17 V11 L12 16 H1Z" fill="#38a8a8" stroke="#888" stroke-width=".8"/><path d="M1 6 H12 V16 M12 6 L17 1" fill="none" stroke="#e8e8e8" stroke-width=".9"/><path d="M1 6 L6 1 H17 L12 6Z" fill="#e8f0f0"/><path d="M12 6 L17 1 V11 L12 16Z" fill="#c8d0d0"/></svg>
<svg class="a" style="left:745px;top:851px;" width="5" height="3" viewBox="0 0 5 3"><path d="M0 0 H5 L2.5 3Z" fill="#000"/></svg>
<div class="a" style="left:131px;top:860px;width:1022px;height:1px;background:#808080"></div>
<div class="a" style="left:131px;top:861px;width:1022px;height:1px;background:#fff"></div>
<div class="a" style="left:135px;top:863px;width:192px;height:17px;border:1px solid;border-color:#b4b0a6 #f4f3ee #f4f3ee #b4b0a6;"></div>
<div class="a" style="left:329px;top:863px;width:170px;height:17px;border:1px solid;border-color:#b4b0a6 #f4f3ee #f4f3ee #b4b0a6;"></div>
<div class="a" style="left:506px;top:863px;width:25px;height:17px;border:1px solid;border-color:#b4b0a6 #f4f3ee #f4f3ee #b4b0a6;"></div>
<div class="a" style="left:537px;top:863px;width:25px;height:17px;border:1px solid;border-color:#b4b0a6 #f4f3ee #f4f3ee #b4b0a6;"></div>
<div class="a" style="left:568px;top:863px;width:25px;height:17px;border:1px solid;border-color:#b4b0a6 #f4f3ee #f4f3ee #b4b0a6;"></div>
<div class="a" style="left:598px;top:863px;width:26px;height:17px;border:1px solid;border-color:#b4b0a6 #f4f3ee #f4f3ee #b4b0a6;"></div>
<div class="a" style="left:629px;top:863px;width:65px;height:17px;border:1px solid;border-color:#b4b0a6 #f4f3ee #f4f3ee #b4b0a6;"></div>
<div class="a" style="left:699px;top:863px;width:43px;height:17px;border:1px solid;border-color:#b4b0a6 #f4f3ee #f4f3ee #b4b0a6;"></div>
<div class="a" style="left:748px;top:863px;width:36px;height:17px;border:1px solid;border-color:#b4b0a6 #f4f3ee #f4f3ee #b4b0a6;"></div>
<div class="a" style="left:789px;top:863px;width:32px;height:17px;border:1px solid;border-color:#b4b0a6 #f4f3ee #f4f3ee #b4b0a6;"></div>
<div class="t" style="left:139px;top:865.7px;font-size:11px;font-family:'Liberation Sans','DejaVu Sans',sans-serif;color:#000;letter-spacing:-0.27px;white-space:pre;">Pág.  1</div>
<div class="t" style="left:205px;top:865.7px;font-size:11px;font-family:'Liberation Sans','DejaVu Sans',sans-serif;color:#000;letter-spacing:-0.32px;white-space:pre;">Sec.  1</div>
<div class="t" style="left:285px;top:865.7px;font-size:11px;font-family:'Liberation Sans','DejaVu Sans',sans-serif;color:#000;letter-spacing:-0.43px;white-space:pre;">1/1</div>
<div class="t" style="left:333px;top:865.7px;font-size:11px;font-family:'Liberation Sans','DejaVu Sans',sans-serif;color:#000;letter-spacing:-0.21px;white-space:pre;">A  2,4 cm</div>
<div class="t" style="left:394px;top:865.7px;font-size:11px;font-family:'Liberation Sans','DejaVu Sans',sans-serif;color:#000;letter-spacing:-0.37px;white-space:pre;">Lín.  1</div>
<div class="t" style="left:444px;top:865.7px;font-size:11px;font-family:'Liberation Sans','DejaVu Sans',sans-serif;color:#000;letter-spacing:-0.11px;white-space:pre;">Col.  1</div>
<div class="t" style="left:509px;top:865.7px;font-size:11px;font-family:'Liberation Sans','DejaVu Sans',sans-serif;color:#808080;letter-spacing:-1.20px;">GRB</div>
<div class="t" style="left:538px;top:865.7px;font-size:11px;font-family:'Liberation Sans','DejaVu Sans',sans-serif;color:#808080;letter-spacing:-0.82px;">MCA</div>
<div class="t" style="left:571px;top:865.7px;font-size:11px;font-family:'Liberation Sans','DejaVu Sans',sans-serif;color:#808080;letter-spacing:-1.14px;">EXT</div>
<div class="t" style="left:600px;top:865.7px;font-size:11px;font-family:'Liberation Sans','DejaVu Sans',sans-serif;color:#808080;letter-spacing:-1.08px;">SOB</div>
<div class="t" style="left:631px;top:865.7px;font-size:11px;font-family:'Liberation Sans','DejaVu Sans',sans-serif;color:#000;letter-spacing:-0.06px;">Inglés (Rein</div>
<svg class="a" style="left:709px;top:864px;" width="20" height="16" viewBox="0 0 20 16"><path d="M1 3 H8 V13 H1Z M8 3 H15 V13 H8Z" fill="#fff" stroke="#000" stroke-width="1.1"/><path d="M2.5 6 h4 M2.5 8.5 h4 M9.5 6 h4" stroke="#333" stroke-width=".8"/><path d="M8 10 L11 13.5 L18 2" stroke="#c02020" stroke-width="1.6" fill="none"/></svg>
<div class="a" style="left:131px;top:881px;width:1022px;height:1px;background:#fff"></div>
<div class="a" style="left:131px;top:885px;width:54px;height:21px;background:#d4d0c8;border:1px solid;border-color:#fff #404040 #404040 #fff;box-shadow:inset -1px -1px 0 #808080;"></div>
<svg class="a" style="left:134px;top:888px;" width="18" height="16" viewBox="0 0 18 16"><path d="M2 2.5 Q5 1 8 2.5 L7 8 Q4 6.5 1 8Z" fill="#e84820"/><path d="M9 3 Q12 4.5 15.5 3 L14.5 8.5 Q11 10 8 8.5Z" fill="#58b830"/><path d="M.8 9 Q4 7.5 6.8 9 L5.8 14.5 Q3 13 0 14.5Z" fill="#3878e0"/><path d="M7.8 9.5 Q11 11 14.2 9.5 L13.2 15 Q10 16.5 6.8 15Z" fill="#f0c020"/></svg>
<div class="t" style="left:151px;top:890.3px;font-size:11.5px;font-family:'Liberation Sans','DejaVu Sans',sans-serif;color:#000;font-weight:bold;letter-spacing:0.16px;">Inicio</div>
<svg class="a" style="left:193px;top:887px;" width="17" height="17" viewBox="0 0 17 17"><rect x="1" y="2" width="14" height="13" rx="3" fill="#3a90f0" stroke="#1a50b0" stroke-width=".8"/><rect x="4" y="4" width="8" height="9" fill="#fff" rx="1"/><path d="M6 11 L11 5" stroke="#e06010" stroke-width="1.6"/><path d="M5 6 h4 M5 8 h3" stroke="#3a90f0" stroke-width=".8"/></svg>
<svg class="a" style="left:216px;top:887px;" width="18" height="17" viewBox="0 0 18 17"><rect x="1" y="3" width="9" height="9" fill="#7fb0e8" stroke="#888" stroke-width=".8"/><rect x="8" y="5" width="8" height="10" fill="#d8d8d8" stroke="#777" stroke-width=".8"/><path d="M9.5 7 v7 M11.5 7 v7 M13.5 7 v7" stroke="#60a860" stroke-width="1.2"/><rect x="2" y="12.5" width="8" height="2.5" fill="#c0c0c0" stroke="#888" stroke-width=".6"/></svg>
<svg class="a" style="left:239px;top:887px;opacity:1;" width="17" height="17" viewBox="0 0 16 16"><defs><radialGradient id="g56" cx=".5" cy=".3" r=".7"><stop offset="0" stop-color="#9fd0ff"/><stop offset=".6" stop-color="#2a5cc0"/><stop offset="1" stop-color="#142a7a"/></radialGradient><linearGradient id="g57" x1="0" y1="0" x2="1" y2="1"><stop offset="0" stop-color="#f08418"/><stop offset=".6" stop-color="#e85c08"/><stop offset="1" stop-color="#f8c828"/></linearGradient></defs><circle cx="8.6" cy="7.4" r="6.4" fill="url(#g56)"/><path d="M7 3.5 Q9 2.5 10 4 Q12 4.5 11 6 Q9 6 8.5 5Z" fill="#3a8a4a" opacity=".6"/><path d="M.8 8 Q.4 4 3.2 1.8 Q2.8 3.6 4.2 4.6 Q5.4 3.8 6.6 4.2 Q5.6 5.2 6 6.2 Q4.4 7.4 4.8 9.2 Q5.8 11.6 8.6 11.4 Q11.4 11 12 8.8 Q11 9.6 9.6 9.2 Q11.6 8 11.4 6 Q13 6.6 13.2 4.6 Q14 3.6 13.6 2.4 Q16 5.6 15.2 9.6 Q13.8 15.4 8.2 15.5 Q1.8 15.4 .8 8Z" fill="url(#g57)"/></svg>
<svg class="a" style="left:262px;top:887px;" width="17" height="17" viewBox="0 0 16 16"><circle cx="8" cy="8.5" r="6" fill="none" stroke="#2a80e0" stroke-width="2.6"/><path d="M3 8.5 H13" stroke="#2a80e0" stroke-width="2"/><path d="M10 11 h4 v3 h-4z" fill="#d4d0c8"/><path d="M1 13 Q-1 6 8 3 Q15 0 15.5 3" fill="none" stroke="#e8b820" stroke-width="1.2"/></svg>
<svg class="a" style="left:285px;top:887px;" width="17" height="17" viewBox="0 0 16 16"><path d="M1 5.5 Q1 2 8 2 Q15 2 15 5.5 L13 6.5 L11.5 4.8 H4.5 L3 6.5Z" fill="#000"/><path d="M4.5 5.5 H11.5 L14 13.5 H2Z" fill="#fff" stroke="#000" stroke-width="1.2"/><circle cx="8" cy="9.5" r="2.6" fill="#fff" stroke="#000" stroke-width="1.1"/><circle cx="8" cy="9.5" r=".9" fill="#000"/><rect x="1.5" y="13.2" width="13" height="1.8" fill="#000"/></svg>
<svg class="a" style="left:309px;top:886px;" width="14" height="19" viewBox="0 0 14 19"><rect x="4" y="5" width="8" height="13" rx="1.5" fill="#b8b8b8" stroke="#666" stroke-width=".8"/><rect x="5.5" y="7" width="5" height="4" fill="#58c858"/><path d="M4.5 5 L3 .8" stroke="#555" stroke-width="1.2"/><path d="M5.5 13 h5 M5.5 15 h5" stroke="#777" stroke-width="1"/><rect x="2" y="9" width="3" height="7" fill="#c0a0a0" stroke="#806060" stroke-width=".5"/></svg>
<div class="a" style="left:346px;top:885px;width:160px;height:21px;background:#d4d0c8;border:1px solid;border-color:#fff #404040 #404040 #fff;box-shadow:inset -1px -1px 0 #808080;"></div>
<svg class="a" style="left:350px;top:887px;" width="17" height="17" viewBox="0 0 17 17"><path d="M3.5 .5 H11 L14.5 4 V16 H3.5Z" fill="#fff" stroke="#000" stroke-width=".9"/><path d="M11 .5 V4 H14.5" fill="none" stroke="#000" stroke-width=".7"/></svg>
<svg class="a" style="left:349px;top:889px;" width="12" height="12" viewBox="0 0 16 16"><circle cx="8" cy="8.5" r="6" fill="none" stroke="#2a80e0" stroke-width="2.6"/><path d="M3 8.5 H13" stroke="#2a80e0" stroke-width="2"/><path d="M10 11 h4 v3 h-4z" fill="#d4d0c8"/><path d="M1 13 Q-1 6 8 3 Q15 0 15.5 3" fill="none" stroke="#e8b820" stroke-width="1.2"/></svg>
<div class="t" style="left:369px;top:890.7px;font-size:11px;font-family:'Liberation Sans','DejaVu Sans',sans-serif;color:#000;letter-spacing:0.19px;">http://www.kissfm.es - K...</div>
<div class="a" style="left:509px;top:885px;width:159px;height:21px;border:1px solid;border-color:#404040 #fff #fff #404040;box-shadow:inset 1px 1px 0 #808080;background-color:#eae8e3;background-image:conic-gradient(#fff 25%,#d4d0c8 0 50%,#fff 0 75%,#d4d0c8 0);background-size:2px 2px"></div>
<svg class="a" style="left:514px;top:888px;" width="16" height="16" viewBox="0 0 16 16"><path d="M4.5 .5 H12 L15.5 4 V15.5 H4.5Z" fill="#fff" stroke="#000" stroke-width="1"/><path d="M12 .5 V4 H15.5" fill="none" stroke="#000" stroke-width=".8"/><rect x=".5" y="3.5" width="10" height="9" fill="#fff" stroke="#0a1a9a" stroke-width="1"/><text x="5.5" y="11" text-anchor="middle" font-family="Liberation Sans,sans-serif" font-weight="bold" font-size="8.5" fill="#0a1a9a">W</text></svg>
<div class="t" style="left:534px;top:891.7px;font-size:11px;font-family:'Liberation Sans','DejaVu Sans',sans-serif;color:#000;font-weight:bold;letter-spacing:-0.26px;">TEXTO TARJETAS NEC...</div>
<div class="a" style="left:1053px;top:884px;width:98px;height:22px;border:1px solid;border-color:#808080 #fff #fff #808080"></div>
<svg class="a" style="left:1056px;top:887px;" width="18" height="17" viewBox="0 0 18 17"><path d="M1 5 Q6 0 10 4 Q13 8 10 13 Q5 15 2 11Z" fill="#909090" stroke="#555" stroke-width=".7"/><ellipse cx="5.5" cy="7.5" rx="2.6" ry="3.6" fill="#d8d8d8" stroke="#666" stroke-width=".6"/><path d="M12 10 Q13.5 13 11 15.5 M14 9.5 Q16.5 13 13 17" stroke="#8888e0" stroke-width=".9" fill="none"/></svg>
<svg class="a" style="left:1075px;top:887px;" width="16" height="16" viewBox="0 0 16 16"><circle cx="8" cy="8" r="7.3" fill="#a8c8f0" stroke="#2840a0" stroke-width="1"/><path d="M8 2.5 L10.5 8 L8 13.5 L5.5 8Z M2.5 8 L8 5.5 L13.5 8 L8 10.5Z" fill="#e8e0f8" stroke="#c03090" stroke-width=".8"/><circle cx="8" cy="8" r="1.3" fill="#c03090"/></svg>
<div class="a" style="left:1092px;top:887px;width:16px;height:16px;background:#000"></div>
<div class="t" style="left:1093px;top:888.3px;font-size:15px;font-family:'Liberation Sans','DejaVu Sans',sans-serif;color:#18b818;font-weight:bold;">V</div>
<div class="t" style="left:1102px;top:887.2px;font-size:8px;font-family:'Liberation Sans','DejaVu Sans',sans-serif;color:#3060ff;font-weight:bold;">n</div>
<div class="t" style="left:1102px;top:894.2px;font-size:8px;font-family:'Liberation Sans','DejaVu Sans',sans-serif;color:#ff3030;font-weight:bold;">c</div>
<div class="t" style="left:1115px;top:889.7px;font-size:11px;font-family:'Liberation Sans','DejaVu Sans',sans-serif;color:#000;letter-spacing:-0.31px;">16:01</div>
<div class="a" style="left:126px;top:140px;width:3px;height:771px;background:linear-gradient(90deg,#6a62b0 1px,#5a90f0 1px,#5a90f0 2px,#2c3c7c 2px)"></div>
<div class="a" style="left:1153px;top:140px;width:3px;height:771px;background:linear-gradient(90deg,#2c3c7c 1px,#5a90f0 1px,#5a90f0 2px,#6a62b0 2px)"></div>
<div class="a" style="left:126px;top:908px;width:1030px;height:3px;background:linear-gradient(#2c3c7c 1px,#5a90f0 1px,#5a90f0 2px,#6a62b0 2px)"></div>
<svg class="a" style="left:725px;top:897px;" width="12" height="11" viewBox="0 0 12 11"><path d="M.7 .7 V14.5 L4 11.5 L6.5 17 L8.6 16 L6.2 10.8 H10.8Z" fill="#fff" stroke="#000" stroke-width="1"/></svg>
<div class="a" style="left:217px;top:228px;width:250px;height:360px;background:#d4d0c8;border:1px solid;border-color:#d4d0c8 #404040 #404040 #d4d0c8;box-shadow:inset 1px 1px 0 #fff,inset -1px -1px 0 #808080"></div>
<div class="a" style="left:221px;top:232px;width:242px;height:18px;background:linear-gradient(90deg,#0a246a,#a6caf0)"></div>
<svg class="a" style="left:223px;top:233px;" width="16" height="16" viewBox="0 0 16 16"><path d="M1 5.5 Q1 2 8 2 Q15 2 15 5.5 L13 6.5 L11.5 4.8 H4.5 L3 6.5Z" fill="#000"/><path d="M4.5 5.5 H11.5 L14 13.5 H2Z" fill="#fff" stroke="#000" stroke-width="1.2"/><circle cx="8" cy="9.5" r="2.6" fill="#fff" stroke="#000" stroke-width="1.1"/><circle cx="8" cy="9.5" r=".9" fill="#000"/><rect x="1.5" y="13.2" width="13" height="1.8" fill="#000"/></svg>
<div class="t" style="left:240px;top:235.8px;font-size:11.5px;font-family:'Liberation Sans','DejaVu Sans',sans-serif;color:#fff;font-weight:bold;letter-spacing:-0.02px;">Enviar Fax</div>
<div class="a" style="left:444px;top:234px;width:16px;height:14px;background:#d4d0c8;border:1px solid;border-color:#fff #404040 #404040 #fff;box-shadow:inset -1px -1px 0 #808080,inset 1px 1px 0 #d4d0c8;"></div>
<svg class="a" style="left:448px;top:237px;" width="9" height="8" viewBox="0 0 9 8"><path d="M.8 .5 L8.2 7.5 M8.2 .5 L.8 7.5" stroke="#000" stroke-width="1.6"/></svg>
<div class="t" style="left:226px;top:255.2px;font-size:11px;font-family:'Liberation Sans','DejaVu Sans',sans-serif;color:#000;letter-spacing:-0.10px;">Archivo</div>
<div class="t" style="left:274px;top:255.2px;font-size:11px;font-family:'Liberation Sans','DejaVu Sans',sans-serif;color:#000;">Ayuda</div>
<div class="a" style="left:221px;top:276px;width:242px;height:267px;border:1px solid #808080;box-shadow:1px 1px 0 #fff,inset 1px 1px 0 #fff"></div>
<div class="t" style="left:233px;top:290.2px;font-size:11px;font-family:'Liberation Sans','DejaVu Sans',sans-serif;color:#000;letter-spacing:-0.12px;">Usuario:</div>
<div class="t" style="left:233px;top:321.2px;font-size:11px;font-family:'Liberation Sans','DejaVu Sans',sans-serif;color:#000;letter-spacing:-0.35px;">PIN:</div>
<div class="t" style="left:233px;top:352.2px;font-size:11px;font-family:'Liberation Sans','DejaVu Sans',sans-serif;color:#000;letter-spacing:0.07px;">Fax enviante:</div>
<div class="t" style="left:233px;top:379.2px;font-size:11px;font-family:'Liberation Sans','DejaVu Sans',sans-serif;color:#000;letter-spacing:-0.04px;">Faxes destino:</div>
<div class="t" style="left:233px;top:392.2px;font-size:11px;font-family:'Liberation Sans','DejaVu Sans',sans-serif;color:#000;">(uno por linea)</div>
<div class="t" style="left:233px;top:473.2px;font-size:11px;font-family:'Liberation Sans','DejaVu Sans',sans-serif;color:#000;letter-spacing:-0.20px;">Encabezado:</div>
<div class="t" style="left:233px;top:500.2px;font-size:11px;font-family:'Liberation Sans','DejaVu Sans',sans-serif;color:#000;letter-spacing:-0.17px;">Opciones:</div>
<div class="a" style="left:342px;top:284px;width:111px;height:21px;background:#fff;border:1px solid;border-color:#808080 #fff #fff #808080;box-shadow:inset 1px 1px 0 #404040,inset -1px -1px 0 #d4d0c8"></div>
<div class="a" style="left:345px;top:288px;width:54px;height:13px;background:#0a246a"></div>
<div class="t" style="left:345px;top:289.7px;font-size:11px;font-family:'Liberation Sans','DejaVu Sans',sans-serif;color:#fff;letter-spacing:-0.12px;">928247936</div>
<div class="a" style="left:342px;top:315px;width:111px;height:21px;background:#fff;border:1px solid;border-color:#808080 #fff #fff #808080;box-shadow:inset 1px 1px 0 #404040,inset -1px -1px 0 #d4d0c8"></div>
<div class="t" style="left:345px;top:321.0px;font-size:10px;font-family:'Liberation Sans','DejaVu Sans',sans-serif;color:#000;letter-spacing:0.83px;">●●●●</div>
<div class="a" style="left:342px;top:346px;width:111px;height:21px;background:#fff;border:1px solid;border-color:#808080 #fff #fff #808080;box-shadow:inset 1px 1px 0 #404040,inset -1px -1px 0 #d4d0c8"></div>
<div class="t" style="left:345px;top:351.7px;font-size:11px;font-family:'Liberation Sans','DejaVu Sans',sans-serif;color:#000;letter-spacing:-0.12px;">902955956</div>
<div class="a" style="left:342px;top:377px;width:111px;height:80px;background:#fff;border:1px solid;border-color:#808080 #fff #fff #808080;box-shadow:inset 1px 1px 0 #404040,inset -1px -1px 0 #d4d0c8"></div>
<div class="a" style="left:435px;top:379px;width:16px;height:76px;background-color:#eae8e3;background-image:conic-gradient(#fff 25%,#d4d0c8 0 50%,#fff 0 75%,#d4d0c8 0);background-size:2px 2px;"></div>
<div class="a" style="left:435px;top:379px;width:16px;height:16px;background:#d4d0c8;border:1px solid;border-color:#d4d0c8 #404040 #404040 #d4d0c8;box-shadow:inset -1px -1px 0 #808080,inset 1px 1px 0 #fff;"></div>
<svg class="a" style="left:439px;top:385px;" width="7" height="4" viewBox="0 0 7 4"><path d="M3.5 0 L7 4 H0Z" fill="#808080"/></svg>
<div class="a" style="left:435px;top:439px;width:16px;height:16px;background:#d4d0c8;border:1px solid;border-color:#d4d0c8 #404040 #404040 #d4d0c8;box-shadow:inset -1px -1px 0 #808080,inset 1px 1px 0 #fff;"></div>
<svg class="a" style="left:439px;top:445px;" width="7" height="4" viewBox="0 0 7 4"><path d="M0 0 H7 L3.5 4Z" fill="#808080"/></svg>
<div class="a" style="left:342px;top:466px;width:111px;height:22px;background:#fff;border:1px solid;border-color:#808080 #fff #fff #808080;box-shadow:inset 1px 1px 0 #404040,inset -1px -1px 0 #d4d0c8"></div>
<div class="t" style="left:345px;top:472.2px;font-size:11px;font-family:'Liberation Sans','DejaVu Sans',sans-serif;color:#000;letter-spacing:-0.71px;">DUOCOM EUROPE, S.</div>
<div class="a" style="left:235px;top:407px;width:26px;height:26px;background:#d4d0c8;border:1px solid;border-color:#fff #404040 #404040 #fff;box-shadow:inset -1px -1px 0 #808080,inset 1px 1px 0 #d4d0c8;"></div>
<svg class="a" style="left:239px;top:411px;" width="18" height="18" viewBox="0 0 18 18"><path d="M3 2 H13 Q15 2 15 4 V15 H5 Q3 15 3 13Z" fill="#8898c8" stroke="#404878" stroke-width=".8"/><path d="M3 13 Q3 11.5 5 11.5 H15" fill="none" stroke="#c8d0e8" stroke-width="1.2"/><text x="9" y="10" text-anchor="middle" font-family="Liberation Sans" font-size="8" fill="#d04060" font-weight="bold">@</text><rect x="15" y="3" width="2" height="3" fill="#e8d020"/><rect x="15" y="6.5" width="2" height="3" fill="#d03030"/><rect x="15" y="10" width="2" height="3" fill="#30a030"/></svg>
<div class="a" style="left:343px;top:498px;width:13px;height:13px;background:#fff;border:1px solid;border-color:#808080 #fff #fff #808080;box-shadow:inset 1px 1px 0 #404040,inset -1px -1px 0 #d4d0c8"></div>
<svg class="a" style="left:345px;top:501px;" width="9" height="8" viewBox="0 0 9 8"><path d="M1 3 L3.5 5.8 L8 .8" stroke="#000" stroke-width="1.8" fill="none"/></svg>
<div class="t" style="left:359px;top:500.2px;font-size:11px;font-family:'Liberation Sans','DejaVu Sans',sans-serif;color:#000;letter-spacing:-0.13px;">Recordar este login</div>
<div class="a" style="left:343px;top:521px;width:13px;height:13px;background:#fff;border:1px solid;border-color:#808080 #fff #fff #808080;box-shadow:inset 1px 1px 0 #404040,inset -1px -1px 0 #d4d0c8"></div>
<div class="t" style="left:359px;top:523.2px;font-size:11px;font-family:'Liberation Sans','DejaVu Sans',sans-serif;color:#000;letter-spacing:-0.13px;">Enviar Portada</div>
<div class="a" style="left:304px;top:549px;width:75px;height:23px;background:#d4d0c8;border:1px solid #000;box-shadow:inset 1px 1px 0 #fff,inset -1px -1px 0 #404040,inset -2px -2px 0 #808080"></div>
<div class="t" style="left:333px;top:554.7px;font-size:11px;font-family:'Liberation Sans','DejaVu Sans',sans-serif;color:#000;letter-spacing:-0.95px;">OK</div>
<div class="a" style="left:0px;top:976px;width:1280px;height:48px;background:linear-gradient(#fdfdfe 0,#f6f6f8 7px,#ececf0 20px,#e0e0e6 23px,#dedee4 34px,#e6e6eb 48px)"></div>
<div class="a" style="left:0px;top:976px;width:1280px;height:1px;background:#fdfdfe"></div>
<svg class="a" style="left:5px;top:985px;" width="34" height="30" viewBox="0 0 34 30"><defs><linearGradient id="g58" x1="0" y1="0" x2="1" y2="1"><stop offset="0" stop-color="#9fc8ff"/><stop offset="1" stop-color="#3a78e0"/></linearGradient></defs><rect x="22" y="1" width="10" height="26" rx="1" fill="#e4e4e8" stroke="#a0a0a8" stroke-width=".8"/><rect x="23.5" y="4" width="7" height="2" fill="#b8b8c0"/><circle cx="27" cy="21" r="1.6" fill="#80c080"/><rect x="1" y="3" width="22" height="17" rx="1.5" fill="#e8e8ec" stroke="#a0a0a8" stroke-width=".8"/><rect x="3" y="5" width="18" height="13" fill="url(#g58)"/><circle cx="12" cy="11.5" r="3.4" fill="none" stroke="#e8f0ff" stroke-width="1.3" stroke-dasharray="2 1.3"/><path d="M8 21 H16 L18 26 H6Z" fill="#d0d0d8" stroke="#a0a0a8" stroke-width=".7"/><ellipse cx="12" cy="27" rx="9" ry="2" fill="#e0e0e6" stroke="#a8a8b0" stroke-width=".6"/></svg>
<svg class="a" style="left:49px;top:983px;" width="34" height="34" viewBox="0 0 34 34"><defs><radialGradient id="g59" cx=".5" cy=".25" r=".8"><stop offset="0" stop-color="#8fbcf4"/><stop offset=".6" stop-color="#2a6cd0"/><stop offset="1" stop-color="#164aa8"/></radialGradient></defs><circle cx="17" cy="17" r="16" fill="#e8f0fc" stroke="#2a60b8" stroke-width="1"/><circle cx="17" cy="17" r="14" fill="url(#g59)"/><path d="M5 27 Q8 19 13 16 L15 10 L17 13 Q20 9 26 7 L24 11 L29 11 L25 14 L27 16 L22 18 Q21 24 24 30 Q14 33 5 27Z" fill="#0c3a8a"/></svg>
<svg class="a" style="left:93px;top:982px;" width="34" height="36" viewBox="0 0 34 36"><g transform="rotate(40 17 20)"><rect x="8" y="12" width="20" height="16" rx="1" fill="#4a7ae0" stroke="#2848a0" stroke-width=".9"/><rect x="10" y="14" width="16" height="6" fill="#7aa4f0"/><path d="M9 28 v3 M12 28 v3 M15 28 v3 M18 28 v3 M21 28 v3 M24 28 v3 M27 28 v3" stroke="#e8c020" stroke-width="1.6"/></g><g transform="rotate(40 24 8)"><rect x="21" y="-2" width="6" height="16" rx="2" fill="#f8b820" stroke="#c88808" stroke-width=".8"/></g></svg>
<svg class="a" style="left:138px;top:984px;" width="34" height="34" viewBox="0 0 34 34"><defs><radialGradient id="g60" cx=".4" cy=".3" r=".8"><stop offset="0" stop-color="#ffffff"/><stop offset="1" stop-color="#c4d4ee"/></radialGradient></defs><circle cx="15" cy="15" r="14" fill="url(#g60)" stroke="#a8b8d8" stroke-width="1"/><path d="M3 10 Q8 7 12 10 Q9 12 3 10Z M11 9 Q16 3 24 5 Q18 8 14 11Z" fill="#3a4a6a"/><rect x="13" y="15" width="17" height="16" fill="#e8e8ee" stroke="#9098a8" stroke-width=".8"/><rect x="18" y="20" width="7" height="7" fill="#6080c0"/><rect x="19.5" y="22" width="4" height="4" fill="#e8a040"/><path d="M15 18 h13" stroke="#a0a8b8" stroke-width="1"/></svg>
<svg class="a" style="left:202px;top:982px;" width="33" height="36" viewBox="0 0 33 36"><path d="M1.5 1.5 H30.5 V26 L23 34 H1.5Z" fill="#fbfbfd" stroke="#a4a6b4" stroke-width="1"/><rect x="2" y="2" width="28" height="2.6" fill="#4aa8f0"/><path d="M30.5 26 H23 V34Z" fill="#e0e0e6" stroke="#a4a6b4" stroke-width=".8"/><path d="M6 8 H26 V26 H6Z M6 11 H26 M6 14 H26 M6 17 H26 M6 20 H26 M6 23 H26 M10 8 V26 M15 8 V26 M20 8 V26" fill="none" stroke="#b8bac6" stroke-width=".7"/></svg>
<svg class="a" style="left:382px;top:984px;" width="33" height="33" viewBox="0 0 33 33"><defs><linearGradient id="g61" x1="0" y1="0" x2="0" y2="1"><stop offset="0" stop-color="#7fb0f6"/><stop offset=".45" stop-color="#3f7ce0"/><stop offset="1" stop-color="#1c54c0"/></linearGradient></defs><rect x=".5" y=".5" width="32" height="32" rx="2.5" fill="url(#g61)" stroke="#1a3e98" stroke-width="1"/><rect x="2" y="2" width="29" height="29" rx="1.5" fill="none" stroke="#9cc0f8" stroke-width=".8" opacity=".7"/><g transform="translate(14.5,20)"><rect x="-2" y="-10.2" width="4" height="4.4" fill="#fff" transform="rotate(22.5)"/><rect x="-2" y="-10.2" width="4" height="4.4" fill="#fff" transform="rotate(67.5)"/><rect x="-2" y="-10.2" width="4" height="4.4" fill="#fff" transform="rotate(112.5)"/><rect x="-2" y="-10.2" width="4" height="4.4" fill="#fff" transform="rotate(157.5)"/><rect x="-2" y="-10.2" width="4" height="4.4" fill="#fff" transform="rotate(202.5)"/><rect x="-2" y="-10.2" width="4" height="4.4" fill="#fff" transform="rotate(247.5)"/><rect x="-2" y="-10.2" width="4" height="4.4" fill="#fff" transform="rotate(292.5)"/><rect x="-2" y="-10.2" width="4" height="4.4" fill="#fff" transform="rotate(337.5)"/><circle r="7" fill="#fff"/><circle r="3.4" fill="#3a72d8"/></g><path d="M12 3 H25 V24 H12Z" fill="url(#g61)" opacity=".0"/><text x="12.5" y="22.5" font-family="DejaVu Sans Condensed,DejaVu Sans,sans-serif" font-weight="bold" font-size="24" fill="#2f66d0" stroke="#2f66d0" stroke-width="2.4">K</text><text x="12.5" y="22.5" font-family="DejaVu Sans Condensed,DejaVu Sans,sans-serif" font-weight="bold" font-size="24" fill="#fff">K</text></svg>
<svg class="a" style="left:425px;top:984px;" width="34" height="34" viewBox="0 0 34 34"><path d="M2 22 L16 13 L32 22 L18 32Z" fill="#5aa0f0" stroke="#2a68c8" stroke-width="1"/><path d="M6 22 L16 16 L26 22 L17 28Z" fill="#f4f8ff"/><path d="M2 22 L18 32 L18 34 L2 24Z" fill="#2a68c8"/><path d="M18 32 L32 22 L32 24 L18 34Z" fill="#1c50a8"/><g transform="rotate(25 22 12)"><rect x="19.5" y="0" width="5" height="20" rx="1" fill="#f8b428" stroke="#c88410" stroke-width=".7"/><path d="M19.5 20 L22 25 L24.5 20Z" fill="#f0d8b0"/></g></svg>
<svg class="a" style="left:469px;top:983px;opacity:1;" width="34" height="34" viewBox="0 0 16 16"><defs><radialGradient id="g62" cx=".5" cy=".3" r=".7"><stop offset="0" stop-color="#9fd0ff"/><stop offset=".6" stop-color="#2a5cc0"/><stop offset="1" stop-color="#142a7a"/></radialGradient><linearGradient id="g63" x1="0" y1="0" x2="1" y2="1"><stop offset="0" stop-color="#f08418"/><stop offset=".6" stop-color="#e85c08"/><stop offset="1" stop-color="#f8c828"/></linearGradient></defs><circle cx="8.6" cy="7.4" r="6.4" fill="url(#g62)"/><path d="M7 3.5 Q9 2.5 10 4 Q12 4.5 11 6 Q9 6 8.5 5Z" fill="#3a8a4a" opacity=".6"/><path d="M.8 8 Q.4 4 3.2 1.8 Q2.8 3.6 4.2 4.6 Q5.4 3.8 6.6 4.2 Q5.6 5.2 6 6.2 Q4.4 7.4 4.8 9.2 Q5.8 11.6 8.6 11.4 Q11.4 11 12 8.8 Q11 9.6 9.6 9.2 Q11.6 8 11.4 6 Q13 6.6 13.2 4.6 Q14 3.6 13.6 2.4 Q16 5.6 15.2 9.6 Q13.8 15.4 8.2 15.5 Q1.8 15.4 .8 8Z" fill="url(#g63)"/></svg>
<svg class="a" style="left:513px;top:984px;" width="34" height="34" viewBox="0 0 34 34"><defs><linearGradient id="g64" x1="0" y1="0" x2="0" y2="1"><stop offset="0" stop-color="#ffd070"/><stop offset="1" stop-color="#f07800"/></linearGradient></defs><path d="M15 3 L24 1 L31 6 L31 28 L23 31 L15 27Z" fill="url(#g64)" stroke="#d87000" stroke-width=".7"/><path d="M22 8 L31 6 M22 11 L31 9" stroke="#ffe8b0" stroke-width="1.2"/><path d="M21 12 L31 13 L31 15 L21 15Z M21 19 L31 20 L31 22 L21 22Z" fill="#fff4d8" opacity=".85"/><path d="M2 19 L13 4 L21 12 L19 31Z" fill="#fcfcfd" stroke="#b4b4c0" stroke-width=".9"/><path d="M2 19 L14 15 L21 12 M14 15 L19 31" fill="none" stroke="#c8c8d4" stroke-width=".9"/></svg>
<div class="a" style="left:565px;top:977px;width:145px;height:23px;background:#4470c4;border:1px solid #6f93dc"></div>
<svg class="a" style="left:568px;top:980px;" width="17" height="17" viewBox="0 0 16 16"><path d="M1 5.5 Q1 2 8 2 Q15 2 15 5.5 L13 6.5 L11.5 4.8 H4.5 L3 6.5Z" fill="#fff"/><path d="M4.5 5.5 H11.5 L14 13.5 H2Z" fill="#4470c4" stroke="#fff" stroke-width="1.2"/><circle cx="8" cy="9.5" r="2.6" fill="#4470c4" stroke="#fff" stroke-width="1.1"/><circle cx="8" cy="9.5" r=".9" fill="#fff"/><rect x="1.5" y="13.2" width="13" height="1.8" fill="#fff"/></svg>
<div class="t" style="left:586px;top:981.3px;font-size:15px;color:#fff;letter-spacing:-0.40px;width:123px;overflow:hidden;-webkit-mask-image:linear-gradient(90deg,#000 82%,transparent 100%);">Identificador de L</div>
<svg class="a" style="left:714px;top:979px;opacity:1;" width="18" height="18" viewBox="0 0 16 16"><defs><radialGradient id="g65" cx=".5" cy=".3" r=".7"><stop offset="0" stop-color="#9fd0ff"/><stop offset=".6" stop-color="#2a5cc0"/><stop offset="1" stop-color="#142a7a"/></radialGradient><linearGradient id="g66" x1="0" y1="0" x2="1" y2="1"><stop offset="0" stop-color="#f08418"/><stop offset=".6" stop-color="#e85c08"/><stop offset="1" stop-color="#f8c828"/></linearGradient></defs><circle cx="8.6" cy="7.4" r="6.4" fill="url(#g65)"/><path d="M7 3.5 Q9 2.5 10 4 Q12 4.5 11 6 Q9 6 8.5 5Z" fill="#3a8a4a" opacity=".6"/><path d="M.8 8 Q.4 4 3.2 1.8 Q2.8 3.6 4.2 4.6 Q5.4 3.8 6.6 4.2 Q5.6 5.2 6 6.2 Q4.4 7.4 4.8 9.2 Q5.8 11.6 8.6 11.4 Q11.4 11 12 8.8 Q11 9.6 9.6 9.2 Q11.6 8 11.4 6 Q13 6.6 13.2 4.6 Q14 3.6 13.6 2.4 Q16 5.6 15.2 9.6 Q13.8 15.4 8.2 15.5 Q1.8 15.4 .8 8Z" fill="url(#g66)"/></svg>
<div class="t" style="left:734px;top:981.3px;font-size:15px;color:#000;letter-spacing:-0.31px;width:121px;overflow:hidden;-webkit-mask-image:linear-gradient(90deg,#000 82%,transparent 100%);">Telefacil - Mozilla</div>
<svg class="a" style="left:861px;top:978px;" width="19" height="20" viewBox="0 0 19 20"><path d="M4 5 L9 1 L15 5" fill="none" stroke="#48a048" stroke-width="1.4"/><rect x="3" y="6" width="14" height="12" fill="#fff" stroke="#48a048" stroke-width="1.2"/><path d="M3 10 H17 M3 14 H17 M8 6 V18 M12.5 6 V18" stroke="#48a048" stroke-width="1"/></svg>
<div class="t" style="left:881px;top:981.3px;font-size:15px;color:#000;letter-spacing:-0.28px;width:123px;overflow:hidden;-webkit-mask-image:linear-gradient(90deg,#000 82%,transparent 100%);">TFE - OpenOffice</div>
<svg class="a" style="left:566px;top:1003px;" width="20" height="19" viewBox="0 0 20 19"><path d="M1 13 L8 2 L10 17Z" fill="#fafafc" stroke="#b8b8c4" stroke-width=".7"/><path d="M8 3 Q12 -1 16 2 Q18 5 17 8 Q19 12 17 17 L10 17 Q13 10 8 3Z" fill="#f49a20" stroke="#d87000" stroke-width=".6"/><path d="M12 6 h4 M12.5 10 h5 M12 14 h5" stroke="#ffe0a0" stroke-width="1"/></svg>
<div class="t" style="left:587px;top:1004.8px;font-size:15px;color:#000;letter-spacing:-0.49px;width:121px;overflow:hidden;-webkit-mask-image:linear-gradient(90deg,#000 82%,transparent 100%);">Carpetas locales/</div>
<svg class="a" style="left:714px;top:1002px;opacity:0.55;" width="18" height="18" viewBox="0 0 16 16"><defs><radialGradient id="g67" cx=".5" cy=".3" r=".7"><stop offset="0" stop-color="#9fd0ff"/><stop offset=".6" stop-color="#2a5cc0"/><stop offset="1" stop-color="#142a7a"/></radialGradient><linearGradient id="g68" x1="0" y1="0" x2="1" y2="1"><stop offset="0" stop-color="#f08418"/><stop offset=".6" stop-color="#e85c08"/><stop offset="1" stop-color="#f8c828"/></linearGradient></defs><circle cx="8.6" cy="7.4" r="6.4" fill="url(#g67)"/><path d="M7 3.5 Q9 2.5 10 4 Q12 4.5 11 6 Q9 6 8.5 5Z" fill="#3a8a4a" opacity=".6"/><path d="M.8 8 Q.4 4 3.2 1.8 Q2.8 3.6 4.2 4.6 Q5.4 3.8 6.6 4.2 Q5.6 5.2 6 6.2 Q4.4 7.4 4.8 9.2 Q5.8 11.6 8.6 11.4 Q11.4 11 12 8.8 Q11 9.6 9.6 9.2 Q11.6 8 11.4 6 Q13 6.6 13.2 4.6 Q14 3.6 13.6 2.4 Q16 5.6 15.2 9.6 Q13.8 15.4 8.2 15.5 Q1.8 15.4 .8 8Z" fill="url(#g68)"/></svg>
<div class="t" style="left:734px;top:1004.8px;font-size:15px;color:#8c8c8c;letter-spacing:-0.09px;width:122px;overflow:hidden;-webkit-mask-image:linear-gradient(90deg,#000 82%,transparent 100%);">Telefónica - Serv</div>
<svg class="a" style="left:862px;top:1002px;" width="18" height="19" viewBox="0 0 18 19"><path d="M1 1 H16 V13 L12 17 H1Z" fill="#fbfbfd" stroke="#a4a6b4" stroke-width="1"/><rect x="1.5" y="1.5" width="14" height="2" fill="#5f8fe4"/><path d="M16 13 H12 V17Z" fill="#d8d8e0" stroke="#a4a6b4" stroke-width=".7"/></svg>
<div class="t" style="left:881px;top:1004.8px;font-size:15px;color:#000;font-weight:bold;letter-spacing:-0.29px;">TightVNC: PC2</div>
<div class="a" style="left:1018px;top:978px;width:30px;height:22px;background:#f4f4f8;border:1px solid #8a8c9c"></div>
<div class="a" style="left:1020px;top:980px;width:24px;height:17px;border:2px solid #4470c4;background:#fff"></div>
<div class="t" style="left:1028px;top:983.3px;font-size:15px;color:#000;">1</div>
<div class="a" style="left:1018px;top:1001px;width:30px;height:22px;background:#ececf1;border:1px solid #8a8c9c"></div>
<div class="t" style="left:1028px;top:1006.3px;font-size:15px;color:#000;">2</div>
<svg class="a" style="left:1062px;top:978px;" width="22" height="23" viewBox="0 0 22 23"><defs><linearGradient id="g69" x1="0" y1="0" x2="1" y2="0"><stop offset="0" stop-color="#3a78c8"/><stop offset="1" stop-color="#9cc8f4"/></linearGradient></defs><path d="M2 8 H7 L15 1 V22 L7 15 H2Z" fill="url(#g69)" stroke="#1c4890" stroke-width="1"/><ellipse cx="15" cy="11.5" rx="3.4" ry="9.5" fill="#6aa0e0" stroke="#1c4890" stroke-width="1"/><ellipse cx="15" cy="11.5" rx="1.3" ry="4" fill="#d8e8fc"/></svg>
<svg class="a" style="left:1086px;top:978px;" width="22" height="22" viewBox="0 0 22 22"><rect x="2" y="4" width="17" height="17" rx="2.5" fill="#f8b428" stroke="#c88410" stroke-width="1"/><rect x="5" y="7" width="11" height="11" fill="#fcfcfc"/><rect x="6.5" y="1.5" width="8" height="5" rx="1.5" fill="#e0e0e4" stroke="#9c9ca8" stroke-width=".8"/><text x="10.5" y="17" text-anchor="middle" font-family="DejaVu Sans,sans-serif" font-size="10" fill="#777">k</text></svg>
<svg class="a" style="left:1109px;top:979px;" width="25" height="20" viewBox="0 0 25 20"><path d="M8 12 L16 1 L19 18Z" fill="#fafafc" stroke="#d0c8c0" stroke-width=".7"/><path d="M15 3 Q20 0 23 4 Q25 9 22 18 L17 18Z" fill="#fcd8a0"/></svg>
<div class="t" style="left:1109px;top:986.0px;font-size:9.5px;color:#1414e8;font-weight:bold;letter-spacing:-0.61px;">2075</div>
<svg class="a" style="left:1061px;top:1003px;" width="23" height="18" viewBox="0 0 23 18"><g transform="rotate(-22 11 9)"><rect x="2" y="4" width="19" height="10" fill="#f4d84a" stroke="#c8a820" stroke-width=".8"/><path d="M5 8 h12 M5 10.5 h9" stroke="#a88a18" stroke-width=".8"/></g></svg>
<svg class="a" style="left:1085px;top:1001px;" width="24" height="23" viewBox="0 0 24 23"><defs><radialGradient id="g70" cx=".5" cy=".25" r=".8"><stop offset="0" stop-color="#8fbcf4"/><stop offset=".6" stop-color="#2a6cd0"/><stop offset="1" stop-color="#164aa8"/></radialGradient></defs><circle cx="12" cy="12" r="11" fill="url(#g70)" stroke="#2050a0" stroke-width="1"/><path d="M3 20 Q6 13 10 11 L13 5 L14 8 L17 4 L16.5 9 Q20 8.5 21 11 L17 12 Q16 17 17 23 Q9 24 3 20Z" fill="#0c3a8a"/></svg>
<div class="t" style="left:1159px;top:982.6px;font-size:17px;font-weight:bold;letter-spacing:-1.02px;">16:06</div>
<div class="t" style="left:1149px;top:1009.4px;font-size:12.5px;letter-spacing:-0.27px;">2008-09-01</div>
<svg class="a" style="left:1243px;top:982px;" width="30" height="37" viewBox="0 0 30 37"><defs><linearGradient id="g71" x1="0" y1="0" x2="1" y2="0"><stop offset="0" stop-color="#9cd0ff"/><stop offset=".5" stop-color="#2a8cf0"/><stop offset="1" stop-color="#8cc8ff"/></linearGradient></defs><path d="M3 8 L6 32 Q15 37 24 32 L27 8Z" fill="url(#g71)" stroke="#5aa0e8" stroke-width=".8"/><ellipse cx="15" cy="8" rx="12.5" ry="5.5" fill="#e8f4ff" stroke="#8cbcec" stroke-width="1"/><ellipse cx="15" cy="8.5" rx="8" ry="3" fill="#fff"/><path d="M9 6 L14 3 L19 5 L22 8 L15 10Z" fill="#fafcff" stroke="#c8dcf0" stroke-width=".6"/></svg>
</body></html>
